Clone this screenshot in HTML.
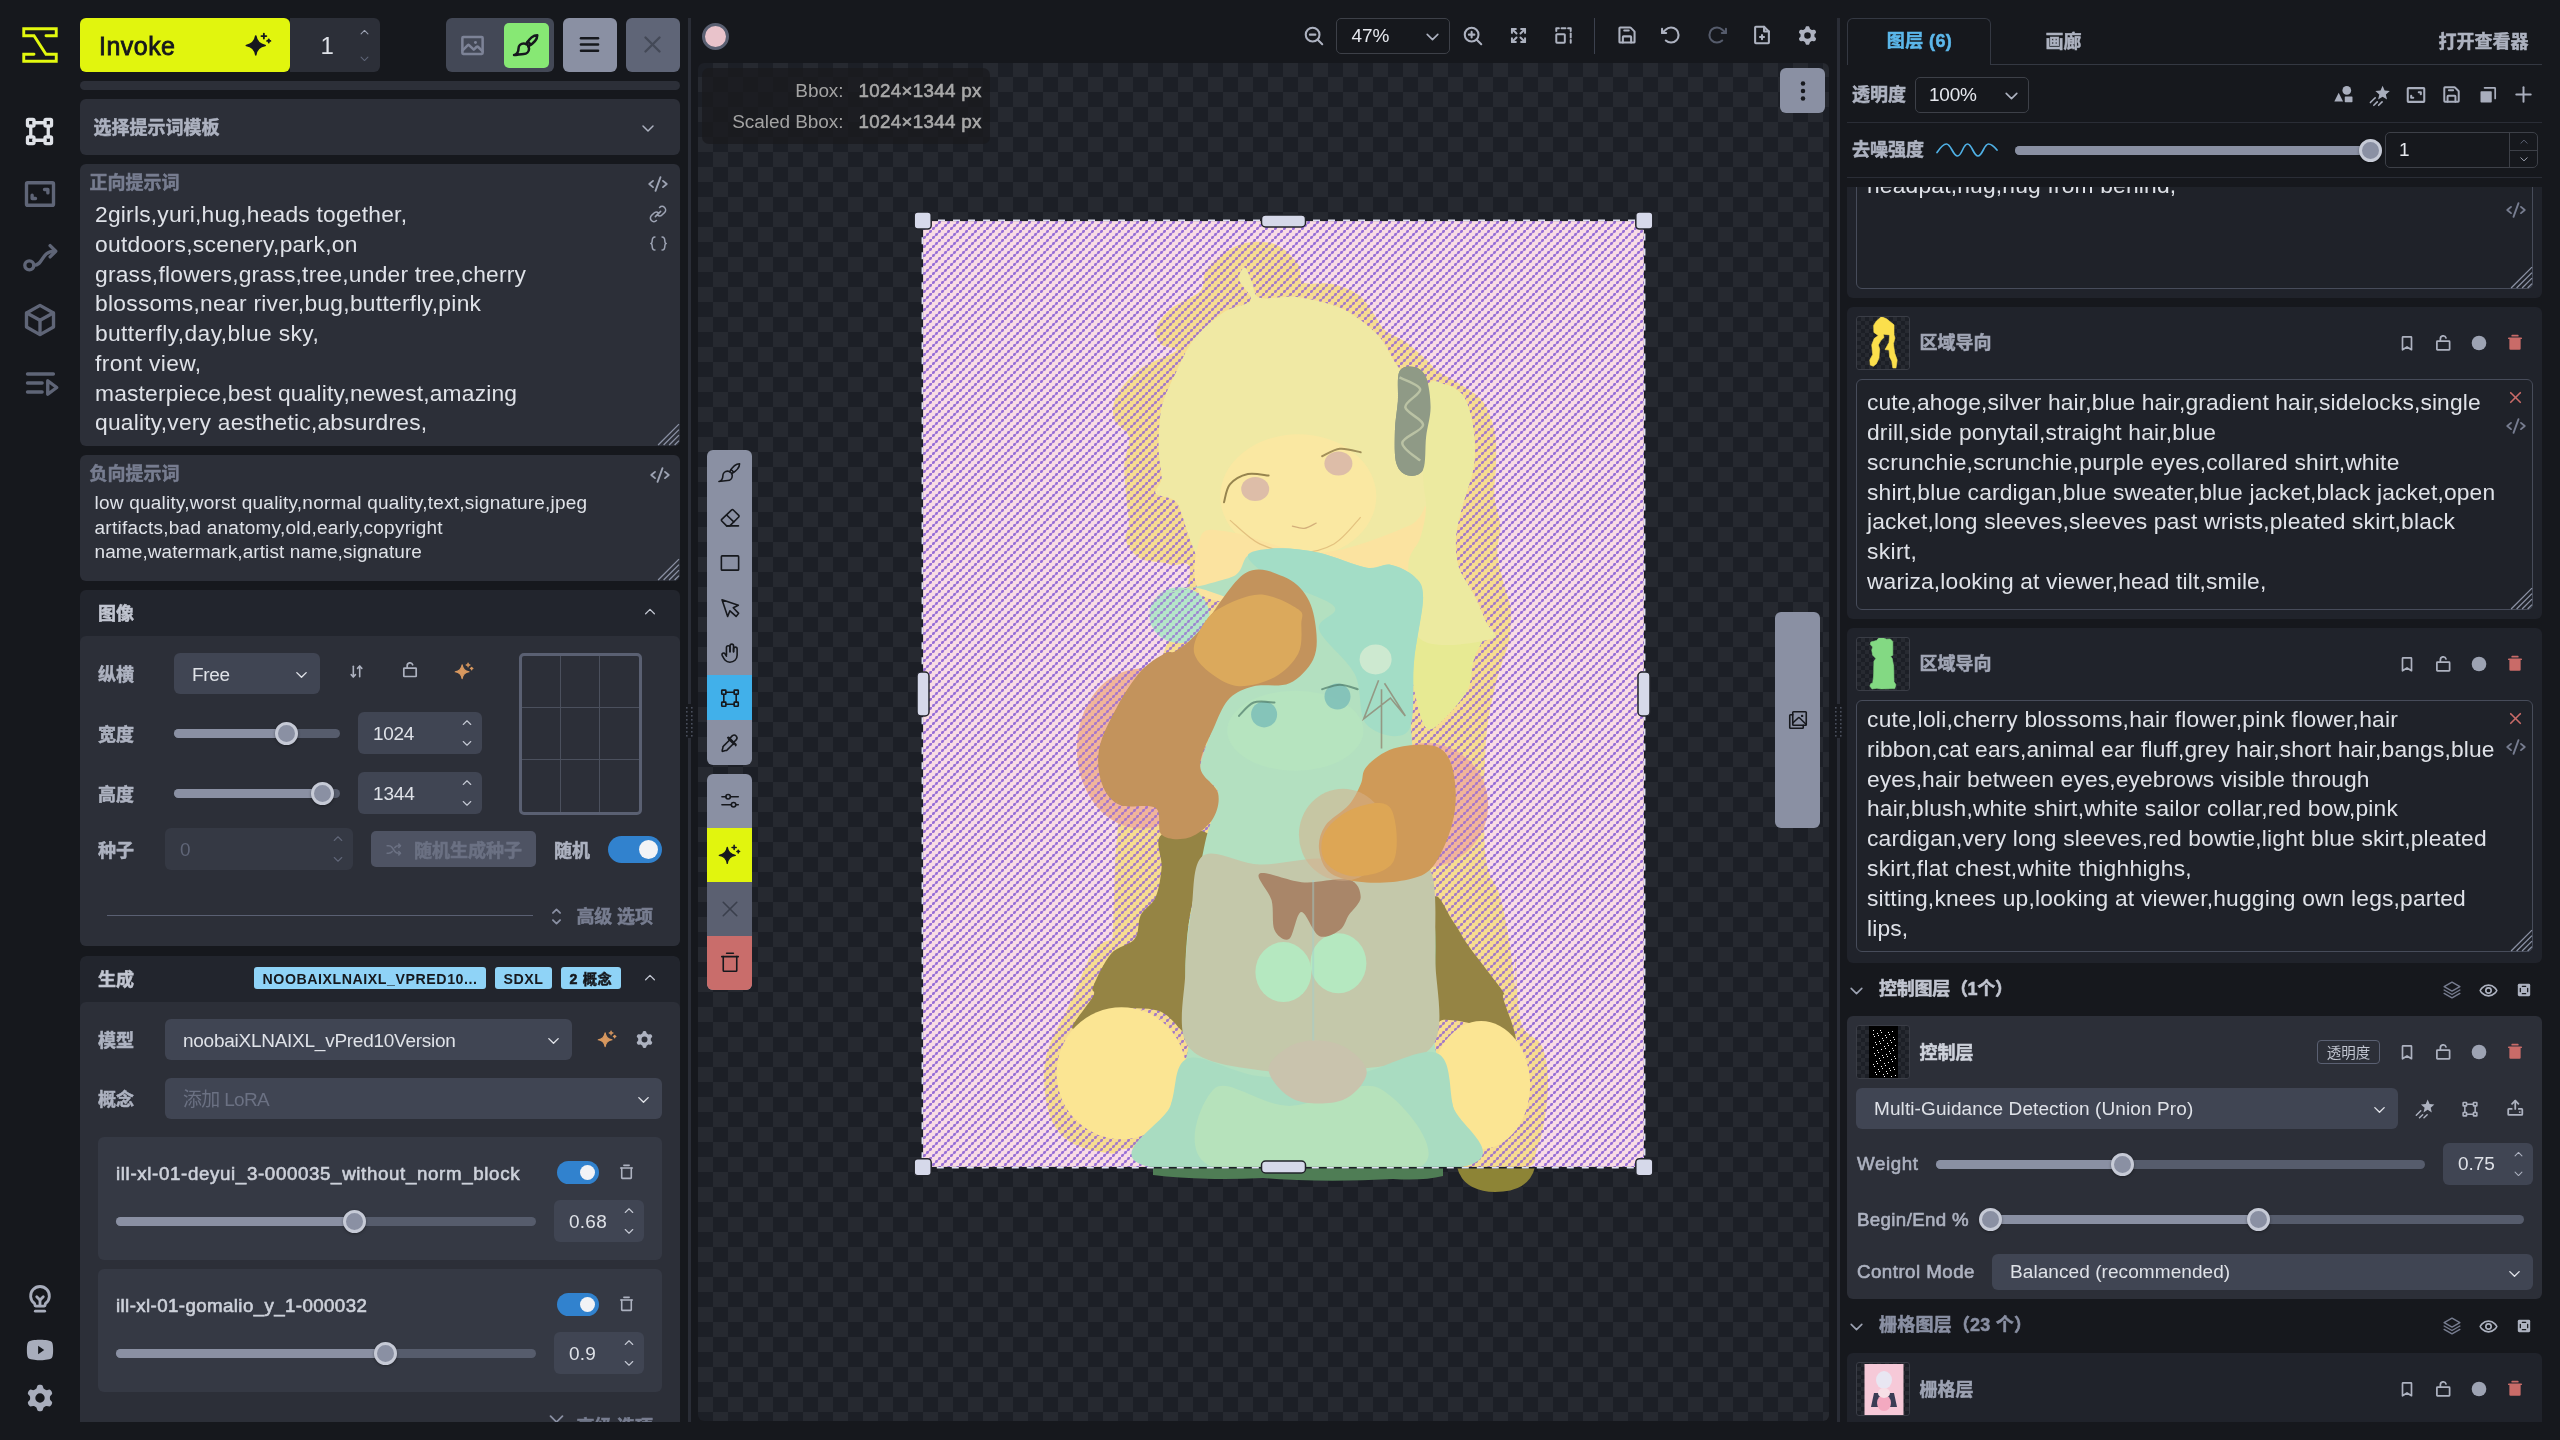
<!DOCTYPE html>
<html lang="zh-CN"><head><meta charset="utf-8"><title>Invoke - Canvas</title>
<style>html,body{margin:0;padding:0}body{width:2560px;height:1440px;overflow:hidden;background:#16181d;font-family:'Liberation Sans','Noto Sans CJK SC',sans-serif;position:relative}#app{position:absolute;left:0;top:0;width:2560px;height:1440px;overflow:hidden;will-change:transform}.a{position:absolute;box-sizing:border-box}.t{position:absolute;white-space:pre;margin:0}svg{position:absolute;overflow:visible}</style></head>
<body>
<div id="app">
<svg viewBox="0 0 80 80" style="left:0px;top:5px;width:80px;height:80px"><path d="M46,30.750 H56.250 V23.750 H23.750 V30.750 H34 L46,49.250 H56.250 V56.250 H23.750 V49.250 H34" fill="none" stroke="#e3f90f" stroke-width="2.9" stroke-linejoin="miter" stroke-linecap="round"/></svg>
<svg viewBox="0 0 256 256" style="left:22.2px;top:113.5px;width:35px;height:35px;color:#dfe2e8;"><g fill="none" stroke="currentColor" stroke-width="24" stroke-linecap="round" stroke-linejoin="round"><rect x="168" y="40" width="48" height="48" rx="8"/><rect x="40" y="40" width="48" height="48" rx="8"/><rect x="168" y="168" width="48" height="48" rx="8"/><rect x="40" y="168" width="48" height="48" rx="8"/><line x1="64" y1="168" x2="64" y2="88"/><line x1="168" y1="192" x2="88" y2="192"/><line x1="192" y1="88" x2="192" y2="168"/><line x1="88" y1="64" x2="168" y2="64"/></g></svg>
<svg viewBox="0 0 256 256" style="left:22px;top:176px;width:36px;height:36px;color:#5f6577;"><g fill="none" stroke="currentColor" stroke-width="24" stroke-linecap="round" stroke-linejoin="round"><rect x="32" y="48" width="192" height="160" rx="8"/><polyline points="160,96 184,96 184,120"/><polyline points="96,160 72,160 72,136"/></g></svg>
<svg viewBox="0 0 256 256" style="left:22px;top:239.5px;width:36px;height:36px;color:#5f6577;"><g fill="none" stroke="currentColor" stroke-width="24" stroke-linecap="round" stroke-linejoin="round"><circle cx="52" cy="180" r="32"/><path d="M84,180 c70,0 50,-100 148,-100"/><polyline points="200,40 240,80 200,120"/></g></svg>
<svg viewBox="0 0 256 256" style="left:21.7px;top:302px;width:36px;height:36px;color:#5f6577;"><g fill="none" stroke="currentColor" stroke-width="24" stroke-linecap="round" stroke-linejoin="round"><path d="M128,24 L224,78 V178 L128,232 L32,178 V78 Z"/><polyline points="34,78 128,130 222,78"/><line x1="128" y1="130" x2="128" y2="230"/></g></svg>
<svg viewBox="0 0 256 256" style="left:22.5px;top:365px;width:36px;height:36px;color:#5f6577;"><g fill="none" stroke="currentColor" stroke-width="24" stroke-linecap="round" stroke-linejoin="round"><line x1="32" y1="64" x2="216" y2="64"/><line x1="32" y1="128" x2="136" y2="128"/><line x1="32" y1="192" x2="136" y2="192"/><polygon points="240,160 176,208 176,112"/></g></svg>
<svg viewBox="0 0 256 256" style="left:25px;top:1284px;width:30px;height:30px;color:#a8adbc;"><g fill="none" stroke="currentColor" stroke-width="24" stroke-linecap="round" stroke-linejoin="round"><line x1="88" y1="232" x2="168" y2="232"/><path d="M78,164 a80,80 0 1 1 100,0 a16,16 0 0 0 -6,12 v4 a8,8 0 0 1 -8,8 H92 a8,8 0 0 1 -8,-8 v-4 a16,16 0 0 0 -6,-12 Z"/><polyline points="100,108 128,136 156,108"/><line x1="128" y1="136" x2="128" y2="186"/></g></svg>
<svg viewBox="0 0 256 256" style="left:25px;top:1335px;width:30px;height:30px;color:#a8adbc;"><path fill="currentColor" d="M234,70 a24,24 0 0 0 -14.5,-16.4 C186,41 131,41 128,41 s-58,0 -91.500,12.600 A24,24 0 0 0 22,70 C19,80 16,98 16,128 s3,48 6,58 a24,24 0 0 0 14.500,16.400 C69,215 125,215 128,215 s59,0 91.500,-12.600 A24,24 0 0 0 234,186 c3,-10 6,-28 6,-58 s-3,-48 -6,-58 Z M112,164 V92 l52,36 Z"/></svg>
<svg viewBox="0 0 256 256" style="left:25px;top:1383px;width:30px;height:30px;color:#a8adbc;"><path fill="currentColor" fill-rule="evenodd" d="M128.0,14.5 L135.4,15.0 L142.7,16.6 L149.2,21.4 L153.6,32.4 L156.7,43.4 L160.8,48.8 L165.5,52.0 L170.3,54.8 L175.1,57.6 L180.2,60.0 L186.9,60.8 L198.0,58.0 L209.7,56.4 L217.1,59.6 L222.2,65.1 L226.3,71.3 L229.6,77.9 L231.8,85.0 L230.9,93.1 L223.6,102.4 L215.6,110.6 L212.9,116.8 L212.5,122.5 L212.5,128.0 L212.5,133.5 L212.9,139.2 L215.6,145.4 L223.6,153.6 L230.9,162.9 L231.8,171.0 L229.6,178.1 L226.3,184.7 L222.2,190.9 L217.1,196.4 L209.7,199.6 L198.0,198.0 L186.9,195.2 L180.2,196.0 L175.1,198.4 L170.3,201.2 L165.5,204.0 L160.8,207.2 L156.7,212.6 L153.6,223.6 L149.2,234.6 L142.7,239.4 L135.4,241.0 L128.0,241.5 L120.6,241.0 L113.3,239.4 L106.8,234.6 L102.4,223.6 L99.3,212.6 L95.2,207.2 L90.5,204.0 L85.7,201.2 L80.9,198.4 L75.8,196.0 L69.1,195.2 L58.0,198.0 L46.3,199.6 L38.9,196.4 L33.8,190.9 L29.7,184.7 L26.4,178.1 L24.2,171.0 L25.1,162.9 L32.4,153.6 L40.4,145.4 L43.1,139.2 L43.5,133.5 L43.5,128.0 L43.5,122.5 L43.1,116.8 L40.4,110.6 L32.4,102.4 L25.1,93.1 L24.2,85.0 L26.4,77.9 L29.7,71.3 L33.8,65.1 L38.9,59.6 L46.3,56.4 L58.0,58.0 L69.1,60.8 L75.8,60.0 L80.9,57.6 L85.7,54.8 L90.5,52.0 L95.2,48.8 L99.3,43.4 L102.4,32.4 L106.8,21.4 L113.3,16.6 L120.6,15.0 Z M168,128 a40,40 0 1 0 -80,0 a40,40 0 1 0 80,0 Z"/></svg>
<div class="a" style="left:290px;top:18px;width:90px;height:54px;background:#2c2f38;border-radius:0 6px 6px 0;"></div>
<div class="a" style="left:80px;top:18px;width:210px;height:54px;background:#e1f50e;border-radius:6px;"></div>
<div class="t" style="left:99.00px;top:28.60px;height:34px;line-height:34px;font-size:24.96px;color:#16181d;-webkit-text-stroke:0.82px currentColor;letter-spacing:0.495px;">Invoke</div>
<svg viewBox="0 0 256 256" style="left:246px;top:32px;width:26px;height:26px;color:#16181d;"><g transform="translate(-14,22) scale(0.86)"><path fill="currentColor" stroke="currentColor" stroke-width="18" stroke-linejoin="round" d="M128,20 C138,84 172,118 236,128 C172,138 138,172 128,236 C118,172 84,138 20,128 C84,118 118,84 128,20 Z"/></g><g fill="none" stroke="currentColor" stroke-width="18" stroke-linecap="round" stroke-linejoin="round"><line x1="176" y1="16" x2="176" y2="64"/><line x1="152" y1="40" x2="200" y2="40"/><line x1="224" y1="72" x2="224" y2="104"/><line x1="208" y1="88" x2="240" y2="88"/></g></svg>
<div class="t" style="left:320.50px;top:28.60px;height:34px;line-height:34px;font-size:24px;color:#dfe2e8;letter-spacing:-3.594px;">1</div>
<svg viewBox="0 0 256 256" style="left:359px;top:26.5px;width:11px;height:11px;color:#9da3b3;"><g fill="none" stroke="currentColor" stroke-width="24" stroke-linecap="round" stroke-linejoin="round"><polyline points="48,160 128,80 208,160"/></g></svg>
<svg viewBox="0 0 256 256" style="left:359px;top:52.5px;width:11px;height:11px;color:#5f6577;"><g fill="none" stroke="currentColor" stroke-width="24" stroke-linecap="round" stroke-linejoin="round"><polyline points="208,96 128,176 48,96"/></g></svg>
<div class="a" style="left:446px;top:18px;width:108px;height:54px;background:#434856;border-radius:6px;"></div>
<svg viewBox="0 0 256 256" style="left:459px;top:31.5px;width:27px;height:27px;color:#7d8397;"><g fill="none" stroke="currentColor" stroke-width="24" stroke-linecap="round" stroke-linejoin="round"><rect x="32" y="48" width="192" height="160" rx="8"/><path d="M32,176 L84,124 a8,8 0 0 1 11.3,0 L140,168 l28,-28 a8,8 0 0 1 11.3,0 L224,184"/></g><circle cx="156" cy="100" r="14" fill="currentColor"/></svg>
<div class="a" style="left:504px;top:23px;width:45px;height:45px;background:#87e874;border-radius:5px;"></div>
<svg viewBox="0 0 256 256" style="left:513px;top:31.5px;width:27px;height:27px;color:#16181d;"><g fill="none" stroke="currentColor" stroke-width="24" stroke-linecap="round" stroke-linejoin="round"><path d="M10,218 c26,0 42,-32 42,-60 a50,50 0 1 1 50,50 c-28,0 -66,10 -92,10 Z"/><path d="M124,116 C142,84 182,30 230,30 c0,48 -54,88 -86,106"/><path d="M138,92 a76,76 0 0 1 28,28"/></g></svg>
<div class="a" style="left:563px;top:18px;width:54px;height:54px;background:#8a90a3;border-radius:6px;"></div>
<svg viewBox="0 0 256 256" style="left:577px;top:32.2px;width:25px;height:25px;color:#16181d;"><g fill="none" stroke="currentColor" stroke-width="24" stroke-linecap="round" stroke-linejoin="round"><line x1="40" y1="128" x2="216" y2="128"/><line x1="40" y1="64" x2="216" y2="64"/><line x1="40" y1="192" x2="216" y2="192"/></g></svg>
<div class="a" style="left:626px;top:18px;width:54px;height:54px;background:#5f6577;border-radius:6px;"></div>
<svg viewBox="0 0 256 256" style="left:639.5px;top:32.2px;width:25px;height:25px;color:#444957;"><g fill="none" stroke="currentColor" stroke-width="24" stroke-linecap="round" stroke-linejoin="round"><line x1="200" y1="56" x2="56" y2="200"/><line x1="200" y1="200" x2="56" y2="56"/></g></svg>
<div class="a" style="left:80px;top:81px;width:600px;height:9px;background:#2c2f38;border-radius:5px;"></div>
<div class="a" style="left:80px;top:99px;width:600px;height:56px;background:#2c2f38;border-radius:6px;"></div>
<div class="t" style="left:93.50px;top:115.90px;height:25px;line-height:25px;font-size:18px;color:#adb2c0;font-weight:700;-webkit-text-stroke:0.5px currentColor;">选择提示词模板</div>
<svg viewBox="0 0 256 256" style="left:640px;top:119.5px;width:16px;height:16px;color:#adb2c0;"><g fill="none" stroke="currentColor" stroke-width="24" stroke-linecap="round" stroke-linejoin="round"><polyline points="208,96 128,176 48,96"/></g></svg>
<div class="a" style="left:80px;top:164px;width:600px;height:282px;background:#2c2f38;border-radius:6px;"></div>
<div class="t" style="left:89.50px;top:170.90px;height:25px;line-height:25px;font-size:18px;color:#777d90;font-weight:700;-webkit-text-stroke:0.5px currentColor;">正向提示词</div>
<div class="t" style="left:95.00px;top:199.30px;height:30px;line-height:30px;font-size:22.79px;color:#dfe2e8;letter-spacing:0.226px;">2girls,yuri,hug,heads together,</div>
<div class="t" style="left:95.00px;top:229.00px;height:30px;line-height:30px;font-size:22.79px;color:#dfe2e8;letter-spacing:0.309px;">outdoors,scenery,park,on</div>
<div class="t" style="left:95.00px;top:258.70px;height:30px;line-height:30px;font-size:22.79px;color:#dfe2e8;letter-spacing:0.228px;">grass,flowers,grass,tree,under tree,cherry</div>
<div class="t" style="left:95.00px;top:288.40px;height:30px;line-height:30px;font-size:22.79px;color:#dfe2e8;letter-spacing:0.279px;">blossoms,near river,bug,butterfly,pink</div>
<div class="t" style="left:95.00px;top:318.10px;height:30px;line-height:30px;font-size:22.79px;color:#dfe2e8;letter-spacing:0.387px;">butterfly,day,blue sky,</div>
<div class="t" style="left:95.00px;top:347.80px;height:30px;line-height:30px;font-size:22.79px;color:#dfe2e8;letter-spacing:0.357px;">front view,</div>
<div class="t" style="left:95.00px;top:377.50px;height:30px;line-height:30px;font-size:22.79px;color:#dfe2e8;letter-spacing:0.186px;">masterpiece,best quality,newest,amazing</div>
<div class="t" style="left:95.00px;top:407.20px;height:30px;line-height:30px;font-size:22.79px;color:#dfe2e8;letter-spacing:0.222px;">quality,very aesthetic,absurdres,</div>
<svg viewBox="0 0 256 256" style="left:648px;top:173.5px;width:20px;height:20px;color:#9da3b3;"><g fill="none" stroke="currentColor" stroke-width="24" stroke-linecap="round" stroke-linejoin="round"><polyline points="64,88 16,128 64,168"/><polyline points="192,88 240,128 192,168"/><line x1="160" y1="40" x2="96" y2="216"/></g></svg>
<svg viewBox="0 0 256 256" style="left:648px;top:203.5px;width:20px;height:20px;color:#9da3b3;"><g fill="none" stroke="currentColor" stroke-width="20" stroke-linecap="round" stroke-linejoin="round"><path d="M94,162 L162,94"/><path d="M104,216 a45,45 0 0 1 -64,-64 l30,-30 a45,45 0 0 1 62,-2" transform="translate(4,-4)"/><path d="M152,40 a45,45 0 0 1 64,64 l-30,30 a45,45 0 0 1 -62,2" transform="translate(-4,4)"/></g></svg>
<svg viewBox="0 0 256 256" style="left:648.5px;top:234px;width:19px;height:19px;color:#9da3b3;"><g fill="none" stroke="currentColor" stroke-width="20" stroke-linecap="round" stroke-linejoin="round"><path d="M80,40 c-64,0 -16,88 -56,88 c40,0 -8,88 56,88"/><path d="M176,40 c64,0 16,88 56,88 c-40,0 8,88 -56,88"/></g></svg>
<svg viewBox="0 0 20 20" style="left:657px;top:423px;width:22px;height:22px;color:#8a90a3"><g stroke="currentColor" stroke-width="1.2" fill="none"><path d="M1,20 L20,1 M6,20 L20,6 M11,20 L20,11 M16,20 L20,16"/></g></svg>
<div class="a" style="left:80px;top:455px;width:600px;height:126px;background:#2c2f38;border-radius:6px;"></div>
<div class="t" style="left:89.50px;top:461.90px;height:25px;line-height:25px;font-size:18px;color:#777d90;font-weight:700;-webkit-text-stroke:0.5px currentColor;">负向提示词</div>
<div class="t" style="left:94.50px;top:489.80px;height:25px;line-height:25px;font-size:18.99px;color:#dfe2e8;letter-spacing:0.230px;">low quality,worst quality,normal quality,text,signature,jpeg</div>
<div class="t" style="left:94.50px;top:514.55px;height:25px;line-height:25px;font-size:18.99px;color:#dfe2e8;letter-spacing:0.252px;">artifacts,bad anatomy,old,early,copyright</div>
<div class="t" style="left:94.50px;top:539.30px;height:25px;line-height:25px;font-size:18.99px;color:#dfe2e8;letter-spacing:0.099px;">name,watermark,artist name,signature</div>
<svg viewBox="0 0 256 256" style="left:650px;top:464.5px;width:20px;height:20px;color:#9da3b3;"><g fill="none" stroke="currentColor" stroke-width="24" stroke-linecap="round" stroke-linejoin="round"><polyline points="64,88 16,128 64,168"/><polyline points="192,88 240,128 192,168"/><line x1="160" y1="40" x2="96" y2="216"/></g></svg>
<svg viewBox="0 0 20 20" style="left:657px;top:558px;width:22px;height:22px;color:#8a90a3"><g stroke="currentColor" stroke-width="1.2" fill="none"><path d="M1,20 L20,1 M6,20 L20,6 M11,20 L20,11 M16,20 L20,16"/></g></svg>
<div class="a" style="left:80px;top:590px;width:600px;height:356px;background:#22252d;border-radius:6px;"></div>
<div class="a" style="left:80px;top:636px;width:600px;height:310px;background:#2c2f38;border-radius:6px;"></div>
<div class="t" style="left:98.00px;top:601.90px;height:25px;line-height:25px;font-size:18px;color:#c1c5d0;font-weight:700;-webkit-text-stroke:0.5px currentColor;">图像</div>
<svg viewBox="0 0 256 256" style="left:643px;top:605px;width:14px;height:14px;color:#c1c5d0;"><g fill="none" stroke="currentColor" stroke-width="24" stroke-linecap="round" stroke-linejoin="round"><polyline points="48,160 128,80 208,160"/></g></svg>
<div class="t" style="left:98.00px;top:662.90px;height:25px;line-height:25px;font-size:18px;color:#adb2c0;font-weight:700;-webkit-text-stroke:0.5px currentColor;">纵横</div>
<div class="a" style="left:174px;top:653px;width:146px;height:41px;background:#404553;border-radius:6px;"></div>
<div class="t" style="left:192.00px;top:661.60px;height:25px;line-height:25px;font-size:18.99px;color:#dfe2e8;letter-spacing:-0.367px;">Free</div>
<svg viewBox="0 0 256 256" style="left:293.5px;top:667px;width:15px;height:15px;color:#dfe2e8;"><g fill="none" stroke="currentColor" stroke-width="24" stroke-linecap="round" stroke-linejoin="round"><polyline points="208,96 128,176 48,96"/></g></svg>
<svg viewBox="0 0 256 256" style="left:347.5px;top:662.5px;width:17px;height:17px;color:#adb2c0;"><g fill="none" stroke="currentColor" stroke-width="24" stroke-linecap="round" stroke-linejoin="round"><polyline points="112,176 80,208 48,176"/><line x1="80" y1="48" x2="80" y2="208"/><polyline points="144,80 176,48 208,80"/><line x1="176" y1="208" x2="176" y2="48"/></g></svg>
<svg viewBox="0 0 256 256" style="left:401px;top:661px;width:18px;height:18px;color:#adb2c0;"><g fill="none" stroke="currentColor" stroke-width="24" stroke-linecap="round" stroke-linejoin="round"><rect x="40" y="100" width="176" height="120" rx="8"/><path d="M88,100 V68 a40,40 0 0 1 78,-14"/></g></svg>
<svg viewBox="0 0 256 256" style="left:454.5px;top:661.5px;width:19px;height:19px;color:#d8985f;"><g transform="translate(-14,22) scale(0.86)"><path fill="currentColor" stroke="currentColor" stroke-width="18" stroke-linejoin="round" d="M128,20 C138,84 172,118 236,128 C172,138 138,172 128,236 C118,172 84,138 20,128 C84,118 118,84 128,20 Z"/></g><g fill="none" stroke="currentColor" stroke-width="18" stroke-linecap="round" stroke-linejoin="round"><line x1="176" y1="16" x2="176" y2="64"/><line x1="152" y1="40" x2="200" y2="40"/><line x1="224" y1="72" x2="224" y2="104"/><line x1="208" y1="88" x2="240" y2="88"/></g></svg>
<div class="a" style="left:519px;top:653px;width:123px;height:162px;border-radius:5px;border:3px solid #5a6072;"></div>
<div class="a" style="left:560px;top:656px;width:1px;height:156px;background:#4b505d;"></div>
<div class="a" style="left:599px;top:656px;width:1px;height:156px;background:#4b505d;"></div>
<div class="a" style="left:522px;top:707px;width:117px;height:1px;background:#4b505d;"></div>
<div class="a" style="left:522px;top:759px;width:117px;height:1px;background:#4b505d;"></div>
<div class="t" style="left:98.00px;top:722.90px;height:25px;line-height:25px;font-size:18px;color:#adb2c0;font-weight:700;-webkit-text-stroke:0.5px currentColor;">宽度</div>
<div class="a" style="left:174px;top:729px;width:166px;height:9px;background:#565c6c;border-radius:4.5px;"></div>
<div class="a" style="left:174px;top:729px;width:112.5px;height:9px;background:#8a90a3;border-radius:4.5px;"></div>
<div class="a" style="left:275px;top:722px;width:23px;height:23px;background:#8a90a3;border-radius:11.5px;border:3.5px solid #c6cad6;box-shadow:0 1px 3px rgba(0,0,0,.35);"></div>
<div class="a" style="left:358px;top:712px;width:124px;height:42px;background:#404553;border-radius:6px;"></div>
<div class="t" style="left:373.00px;top:721.10px;height:25px;line-height:25px;font-size:18.99px;color:#dfe2e8;letter-spacing:-0.305px;">1024</div>
<svg viewBox="0 0 256 256" style="left:460.5px;top:717px;width:12px;height:12px;color:#c3c7d2;"><g fill="none" stroke="currentColor" stroke-width="24" stroke-linecap="round" stroke-linejoin="round"><polyline points="48,160 128,80 208,160"/></g></svg>
<svg viewBox="0 0 256 256" style="left:460.5px;top:737px;width:12px;height:12px;color:#c3c7d2;"><g fill="none" stroke="currentColor" stroke-width="24" stroke-linecap="round" stroke-linejoin="round"><polyline points="208,96 128,176 48,96"/></g></svg>
<div class="t" style="left:98.00px;top:782.90px;height:25px;line-height:25px;font-size:18px;color:#adb2c0;font-weight:700;-webkit-text-stroke:0.5px currentColor;">高度</div>
<div class="a" style="left:174px;top:789px;width:166px;height:9px;background:#565c6c;border-radius:4.5px;"></div>
<div class="a" style="left:174px;top:789px;width:148px;height:9px;background:#8a90a3;border-radius:4.5px;"></div>
<div class="a" style="left:310.5px;top:782px;width:23px;height:23px;background:#8a90a3;border-radius:11.5px;border:3.5px solid #c6cad6;box-shadow:0 1px 3px rgba(0,0,0,.35);"></div>
<div class="a" style="left:358px;top:772px;width:124px;height:42px;background:#404553;border-radius:6px;"></div>
<div class="t" style="left:373.00px;top:781.10px;height:25px;line-height:25px;font-size:18.99px;color:#dfe2e8;letter-spacing:-0.133px;">1344</div>
<svg viewBox="0 0 256 256" style="left:460.5px;top:777px;width:12px;height:12px;color:#c3c7d2;"><g fill="none" stroke="currentColor" stroke-width="24" stroke-linecap="round" stroke-linejoin="round"><polyline points="48,160 128,80 208,160"/></g></svg>
<svg viewBox="0 0 256 256" style="left:460.5px;top:797px;width:12px;height:12px;color:#c3c7d2;"><g fill="none" stroke="currentColor" stroke-width="24" stroke-linecap="round" stroke-linejoin="round"><polyline points="208,96 128,176 48,96"/></g></svg>
<div class="t" style="left:98.00px;top:838.90px;height:25px;line-height:25px;font-size:18px;color:#adb2c0;font-weight:700;-webkit-text-stroke:0.5px currentColor;">种子</div>
<div class="a" style="left:165px;top:828px;width:188px;height:42px;background:#353944;border-radius:6px;"></div>
<div class="t" style="left:180.00px;top:837.10px;height:25px;line-height:25px;font-size:18.99px;color:#5f6577;letter-spacing:0.797px;">0</div>
<svg viewBox="0 0 256 256" style="left:331.5px;top:833px;width:12px;height:12px;color:#5f6577;"><g fill="none" stroke="currentColor" stroke-width="24" stroke-linecap="round" stroke-linejoin="round"><polyline points="48,160 128,80 208,160"/></g></svg>
<svg viewBox="0 0 256 256" style="left:331.5px;top:853px;width:12px;height:12px;color:#5f6577;"><g fill="none" stroke="currentColor" stroke-width="24" stroke-linecap="round" stroke-linejoin="round"><polyline points="208,96 128,176 48,96"/></g></svg>
<div class="a" style="left:371px;top:831px;width:165px;height:36px;background:#4e5363;border-radius:5px;"></div>
<svg viewBox="0 0 256 256" style="left:384.5px;top:840.5px;width:17px;height:17px;color:#6b7183;"><g fill="none" stroke="currentColor" stroke-width="24" stroke-linecap="round" stroke-linejoin="round"><path d="M32,72 H55.100 a64,64 0 0 1 52.100,26.800 l41.600,58.400 A64,64 0 0 0 200.900,184 H232"/><polyline points="208,48 232,72 208,96"/><polyline points="208,160 232,184 208,208"/><path d="M147.700,100.500 l1.100,-1.700 A64,64 0 0 1 200.900,72 H232"/><path d="M32,184 H55.100 a64,64 0 0 0 52.100,-26.800 l1.100,-1.700"/></g></svg>
<div class="t" style="left:414.00px;top:838.90px;height:25px;line-height:25px;font-size:18px;color:#6b7183;font-weight:700;-webkit-text-stroke:0.5px currentColor;">随机生成种子</div>
<div class="t" style="left:554.00px;top:838.90px;height:25px;line-height:25px;font-size:18px;color:#adb2c0;font-weight:700;-webkit-text-stroke:0.5px currentColor;">随机</div>
<div class="a" style="left:608px;top:836px;width:54px;height:27px;background:#3182ce;border-radius:13.5px;"></div>
<div class="a" style="left:638.75px;top:839.75px;width:19.5px;height:19.5px;background:#f2f3f6;border-radius:9.75px;"></div>
<div class="a" style="left:107px;top:915px;width:426px;height:1px;background:#5a6072;"></div>
<svg viewBox="0 0 256 256" style="left:546.5px;top:906.5px;width:19px;height:19px;color:#8a90a3;"><g fill="none" stroke="currentColor" stroke-width="24" stroke-linecap="round" stroke-linejoin="round"><polyline points="80,176 128,224 176,176"/><polyline points="80,80 128,32 176,80"/></g></svg>
<div class="t" style="left:576.50px;top:904.90px;height:25px;line-height:25px;font-size:18px;color:#777d90;font-weight:700;-webkit-text-stroke:0.5px currentColor;letter-spacing:-0.150px;">高级 选项</div>
<div class="a" style="left:80px;top:956px;width:600px;height:466px;overflow:hidden;border-radius:6px 6px 0 0">
<div class="a" style="left:0px;top:0px;width:600px;height:480px;background:#22252d;border-radius:6px;"></div>
<div class="a" style="left:0px;top:46px;width:600px;height:440px;background:#2c2f38;border-radius:6px;"></div>
</div>
<div class="t" style="left:98.00px;top:967.90px;height:25px;line-height:25px;font-size:18px;color:#c1c5d0;font-weight:700;-webkit-text-stroke:0.5px currentColor;">生成</div>
<div class="a" style="left:254px;top:967px;width:232px;height:22px;background:#8fd3f7;border-radius:3px;"></div>
<div class="t" style="left:262.50px;top:969.10px;height:20px;line-height:20px;font-size:14.2px;color:#16181d;font-weight:700;letter-spacing:0.549px;">NOOBAIXLNAIXL_VPRED10...</div>
<div class="a" style="left:495px;top:967px;width:57px;height:22px;background:#8fd3f7;border-radius:3px;"></div>
<div class="t" style="left:503.50px;top:969.10px;height:20px;line-height:20px;font-size:14.2px;color:#16181d;font-weight:700;letter-spacing:0.539px;">SDXL</div>
<div class="a" style="left:561px;top:967px;width:60px;height:22px;background:#8fd3f7;border-radius:3px;"></div>
<div class="t" style="left:569.50px;top:969.10px;height:20px;line-height:20px;font-size:14.2px;color:#16181d;font-weight:700;-webkit-text-stroke:0.5px currentColor;letter-spacing:0.695px;">2 概念</div>
<svg viewBox="0 0 256 256" style="left:643px;top:971px;width:14px;height:14px;color:#c1c5d0;"><g fill="none" stroke="currentColor" stroke-width="24" stroke-linecap="round" stroke-linejoin="round"><polyline points="48,160 128,80 208,160"/></g></svg>
<div class="t" style="left:98.00px;top:1028.90px;height:25px;line-height:25px;font-size:18px;color:#adb2c0;font-weight:700;-webkit-text-stroke:0.5px currentColor;">模型</div>
<div class="a" style="left:165px;top:1019px;width:407px;height:41px;background:#404553;border-radius:6px;"></div>
<div class="t" style="left:183.00px;top:1027.60px;height:25px;line-height:25px;font-size:18.99px;color:#dfe2e8;letter-spacing:-0.251px;">noobaiXLNAIXL_vPred10Version</div>
<svg viewBox="0 0 256 256" style="left:545.5px;top:1033px;width:15px;height:15px;color:#dfe2e8;"><g fill="none" stroke="currentColor" stroke-width="24" stroke-linecap="round" stroke-linejoin="round"><polyline points="208,96 128,176 48,96"/></g></svg>
<svg viewBox="0 0 256 256" style="left:598px;top:1029.5px;width:19px;height:19px;color:#d8985f;"><g transform="translate(-14,22) scale(0.86)"><path fill="currentColor" stroke="currentColor" stroke-width="18" stroke-linejoin="round" d="M128,20 C138,84 172,118 236,128 C172,138 138,172 128,236 C118,172 84,138 20,128 C84,118 118,84 128,20 Z"/></g><g fill="none" stroke="currentColor" stroke-width="18" stroke-linecap="round" stroke-linejoin="round"><line x1="176" y1="16" x2="176" y2="64"/><line x1="152" y1="40" x2="200" y2="40"/><line x1="224" y1="72" x2="224" y2="104"/><line x1="208" y1="88" x2="240" y2="88"/></g></svg>
<svg viewBox="0 0 256 256" style="left:634.5px;top:1030px;width:19px;height:19px;color:#adb2c0;"><path fill="currentColor" fill-rule="evenodd" d="M128.0,14.5 L135.4,15.0 L142.7,16.6 L149.2,21.4 L153.6,32.4 L156.7,43.4 L160.8,48.8 L165.5,52.0 L170.3,54.8 L175.1,57.6 L180.2,60.0 L186.9,60.8 L198.0,58.0 L209.7,56.4 L217.1,59.6 L222.2,65.1 L226.3,71.3 L229.6,77.9 L231.8,85.0 L230.9,93.1 L223.6,102.4 L215.6,110.6 L212.9,116.8 L212.5,122.5 L212.5,128.0 L212.5,133.5 L212.9,139.2 L215.6,145.4 L223.6,153.6 L230.9,162.9 L231.8,171.0 L229.6,178.1 L226.3,184.7 L222.2,190.9 L217.1,196.4 L209.7,199.6 L198.0,198.0 L186.9,195.2 L180.2,196.0 L175.1,198.4 L170.3,201.2 L165.5,204.0 L160.8,207.2 L156.7,212.6 L153.6,223.6 L149.2,234.6 L142.7,239.4 L135.4,241.0 L128.0,241.5 L120.6,241.0 L113.3,239.4 L106.8,234.6 L102.4,223.6 L99.3,212.6 L95.2,207.2 L90.5,204.0 L85.7,201.2 L80.9,198.4 L75.8,196.0 L69.1,195.2 L58.0,198.0 L46.3,199.6 L38.9,196.4 L33.8,190.9 L29.7,184.7 L26.4,178.1 L24.2,171.0 L25.1,162.9 L32.4,153.6 L40.4,145.4 L43.1,139.2 L43.5,133.5 L43.5,128.0 L43.5,122.5 L43.1,116.8 L40.4,110.6 L32.4,102.4 L25.1,93.1 L24.2,85.0 L26.4,77.9 L29.7,71.3 L33.8,65.1 L38.9,59.6 L46.3,56.4 L58.0,58.0 L69.1,60.8 L75.8,60.0 L80.9,57.6 L85.7,54.8 L90.5,52.0 L95.2,48.8 L99.3,43.4 L102.4,32.4 L106.8,21.4 L113.3,16.6 L120.6,15.0 Z M168,128 a40,40 0 1 0 -80,0 a40,40 0 1 0 80,0 Z"/></svg>
<div class="t" style="left:98.00px;top:1087.90px;height:25px;line-height:25px;font-size:18px;color:#adb2c0;font-weight:700;-webkit-text-stroke:0.5px currentColor;">概念</div>
<div class="a" style="left:165px;top:1078px;width:497px;height:41px;background:#404553;border-radius:6px;"></div>
<div class="t" style="left:183.00px;top:1086.60px;height:25px;line-height:25px;font-size:18.99px;color:#6b7183;letter-spacing:-0.670px;">添加 LoRA</div>
<svg viewBox="0 0 256 256" style="left:635.5px;top:1092px;width:15px;height:15px;color:#dfe2e8;"><g fill="none" stroke="currentColor" stroke-width="24" stroke-linecap="round" stroke-linejoin="round"><polyline points="208,96 128,176 48,96"/></g></svg>
<div class="a" style="left:98px;top:1137px;width:564px;height:123px;background:#353944;border-radius:6px;"></div>
<div class="t" style="left:116.00px;top:1160.60px;height:25px;line-height:25px;font-size:18.72px;color:#cdd1da;-webkit-text-stroke:0.61px currentColor;letter-spacing:0.646px;">ill-xl-01-deyui_3-000035_without_norm_block</div>
<div class="a" style="left:557px;top:1161px;width:42px;height:23px;background:#3182ce;border-radius:11.5px;"></div>
<div class="a" style="left:579.75px;top:1164.75px;width:15.5px;height:15.5px;background:#f2f3f6;border-radius:7.75px;"></div>
<svg viewBox="0 0 256 256" style="left:617.5px;top:1163.5px;width:17px;height:17px;color:#adb2c0;"><g fill="none" stroke="currentColor" stroke-width="24" stroke-linecap="round" stroke-linejoin="round"><line x1="216" y1="60" x2="40" y2="60"/><line x1="88" y1="20" x2="168" y2="20"/><path d="M200,60 V208 a8,8 0 0 1 -8,8 H64 a8,8 0 0 1 -8,-8 V60"/></g></svg>
<div class="a" style="left:116px;top:1216.5px;width:420px;height:9px;background:#565c6c;border-radius:4.5px;"></div>
<div class="a" style="left:116px;top:1216.5px;width:238.5px;height:9px;background:#8a90a3;border-radius:4.5px;"></div>
<div class="a" style="left:343px;top:1209.5px;width:23px;height:23px;background:#8a90a3;border-radius:11.5px;border:3.5px solid #c6cad6;box-shadow:0 1px 3px rgba(0,0,0,.35);"></div>
<div class="a" style="left:554px;top:1200px;width:90px;height:42px;background:#404553;border-radius:6px;"></div>
<div class="t" style="left:569.00px;top:1209.10px;height:25px;line-height:25px;font-size:18.99px;color:#dfe2e8;letter-spacing:0.246px;">0.68</div>
<svg viewBox="0 0 256 256" style="left:622.5px;top:1205px;width:12px;height:12px;color:#c3c7d2;"><g fill="none" stroke="currentColor" stroke-width="24" stroke-linecap="round" stroke-linejoin="round"><polyline points="48,160 128,80 208,160"/></g></svg>
<svg viewBox="0 0 256 256" style="left:622.5px;top:1225px;width:12px;height:12px;color:#c3c7d2;"><g fill="none" stroke="currentColor" stroke-width="24" stroke-linecap="round" stroke-linejoin="round"><polyline points="208,96 128,176 48,96"/></g></svg>
<div class="a" style="left:98px;top:1269px;width:564px;height:123px;background:#353944;border-radius:6px;"></div>
<div class="t" style="left:116.00px;top:1292.60px;height:25px;line-height:25px;font-size:18.72px;color:#cdd1da;-webkit-text-stroke:0.61px currentColor;letter-spacing:0.397px;">ill-xl-01-gomalio_y_1-000032</div>
<div class="a" style="left:557px;top:1293px;width:42px;height:23px;background:#3182ce;border-radius:11.5px;"></div>
<div class="a" style="left:579.75px;top:1296.75px;width:15.5px;height:15.5px;background:#f2f3f6;border-radius:7.75px;"></div>
<svg viewBox="0 0 256 256" style="left:617.5px;top:1295.5px;width:17px;height:17px;color:#adb2c0;"><g fill="none" stroke="currentColor" stroke-width="24" stroke-linecap="round" stroke-linejoin="round"><line x1="216" y1="60" x2="40" y2="60"/><line x1="88" y1="20" x2="168" y2="20"/><path d="M200,60 V208 a8,8 0 0 1 -8,8 H64 a8,8 0 0 1 -8,-8 V60"/></g></svg>
<div class="a" style="left:116px;top:1348.5px;width:420px;height:9px;background:#565c6c;border-radius:4.5px;"></div>
<div class="a" style="left:116px;top:1348.5px;width:269.5px;height:9px;background:#8a90a3;border-radius:4.5px;"></div>
<div class="a" style="left:374px;top:1341.5px;width:23px;height:23px;background:#8a90a3;border-radius:11.5px;border:3.5px solid #c6cad6;box-shadow:0 1px 3px rgba(0,0,0,.35);"></div>
<div class="a" style="left:554px;top:1332px;width:90px;height:42px;background:#404553;border-radius:6px;"></div>
<div class="t" style="left:569.00px;top:1341.10px;height:25px;line-height:25px;font-size:18.99px;color:#dfe2e8;letter-spacing:0.240px;">0.9</div>
<svg viewBox="0 0 256 256" style="left:622.5px;top:1337px;width:12px;height:12px;color:#c3c7d2;"><g fill="none" stroke="currentColor" stroke-width="24" stroke-linecap="round" stroke-linejoin="round"><polyline points="48,160 128,80 208,160"/></g></svg>
<svg viewBox="0 0 256 256" style="left:622.5px;top:1357px;width:12px;height:12px;color:#c3c7d2;"><g fill="none" stroke="currentColor" stroke-width="24" stroke-linecap="round" stroke-linejoin="round"><polyline points="208,96 128,176 48,96"/></g></svg>
<div class="a" style="left:80px;top:1400px;width:600px;height:22px;overflow:hidden">
<svg viewBox="0 0 256 256" style="left:466.5px;top:8.5px;width:19px;height:19px;color:#8a90a3"><g fill="none" stroke="currentColor" stroke-width="24" stroke-linecap="round" stroke-linejoin="round"><polyline points="208,96 128,176 48,96"/></g></svg>
<div class="t" style="left:496.50px;top:14.90px;height:25px;line-height:25px;font-size:18px;color:#777d90;font-weight:700;-webkit-text-stroke:0.5px currentColor;letter-spacing:-0.150px;">高级 选项</div>
</div>
<div class="a" style="left:688px;top:18px;width:3px;height:1404px;background:#2a2d36;"></div>
<div class="a" style="left:684px;top:704px;width:11px;height:34px;background:#16181d;"></div>
<svg viewBox="0 0 11 34" style="left:684px;top:704px;width:11px;height:34px"><g fill="#4a4f5c"><rect x="2" y="3" width="1.6" height="1.6"/><rect x="2" y="7" width="1.6" height="1.6"/><rect x="2" y="11" width="1.6" height="1.6"/><rect x="2" y="15" width="1.6" height="1.6"/><rect x="2" y="19" width="1.6" height="1.6"/><rect x="2" y="23" width="1.6" height="1.6"/><rect x="2" y="27" width="1.6" height="1.6"/><rect x="2" y="31" width="1.6" height="1.6"/><rect x="7" y="3" width="1.6" height="1.6"/><rect x="7" y="7" width="1.6" height="1.6"/><rect x="7" y="11" width="1.6" height="1.6"/><rect x="7" y="15" width="1.6" height="1.6"/><rect x="7" y="19" width="1.6" height="1.6"/><rect x="7" y="23" width="1.6" height="1.6"/><rect x="7" y="27" width="1.6" height="1.6"/><rect x="7" y="31" width="1.6" height="1.6"/></g></svg>
<div class="a" style="left:1837px;top:18px;width:3px;height:1404px;background:#2a2d36;"></div>
<div class="a" style="left:1833px;top:704px;width:11px;height:34px;background:#16181d;"></div>
<svg viewBox="0 0 11 34" style="left:1833px;top:704px;width:11px;height:34px"><g fill="#4a4f5c"><rect x="2" y="3" width="1.6" height="1.6"/><rect x="2" y="7" width="1.6" height="1.6"/><rect x="2" y="11" width="1.6" height="1.6"/><rect x="2" y="15" width="1.6" height="1.6"/><rect x="2" y="19" width="1.6" height="1.6"/><rect x="2" y="23" width="1.6" height="1.6"/><rect x="2" y="27" width="1.6" height="1.6"/><rect x="2" y="31" width="1.6" height="1.6"/><rect x="7" y="3" width="1.6" height="1.6"/><rect x="7" y="7" width="1.6" height="1.6"/><rect x="7" y="11" width="1.6" height="1.6"/><rect x="7" y="15" width="1.6" height="1.6"/><rect x="7" y="19" width="1.6" height="1.6"/><rect x="7" y="23" width="1.6" height="1.6"/><rect x="7" y="27" width="1.6" height="1.6"/><rect x="7" y="31" width="1.6" height="1.6"/></g></svg>
<div class="a" style="left:702px;top:23px;width:27px;height:27px;background:#e9c3cb;border-radius:14px;border:3px solid #5a6072;"></div>
<svg viewBox="0 0 256 256" style="left:1303px;top:24.5px;width:22px;height:22px;color:#adb2c0;"><g fill="none" stroke="currentColor" stroke-width="24" stroke-linecap="round" stroke-linejoin="round"><circle cx="112" cy="112" r="80"/><line x1="168.600" y1="168.600" x2="224" y2="224"/><line x1="80" y1="112" x2="144" y2="112"/></g></svg>
<div class="a" style="left:1336px;top:18px;width:114px;height:36px;border-radius:5px;border:1px solid #3d4048;"></div>
<div class="t" style="left:1351.50px;top:23.00px;height:25px;line-height:25px;font-size:18.99px;color:#e6e8ee;">47%</div>
<svg viewBox="0 0 256 256" style="left:1423.5px;top:27.5px;width:17px;height:17px;color:#adb2c0;"><g fill="none" stroke="currentColor" stroke-width="24" stroke-linecap="round" stroke-linejoin="round"><polyline points="208,96 128,176 48,96"/></g></svg>
<svg viewBox="0 0 256 256" style="left:1462px;top:24.5px;width:22px;height:22px;color:#adb2c0;"><g fill="none" stroke="currentColor" stroke-width="24" stroke-linecap="round" stroke-linejoin="round"><circle cx="112" cy="112" r="80"/><line x1="168.600" y1="168.600" x2="224" y2="224"/><line x1="80" y1="112" x2="144" y2="112"/><line x1="112" y1="80" x2="112" y2="144"/></g></svg>
<svg viewBox="0 0 256 256" style="left:1507.5px;top:24.5px;width:21px;height:21px;color:#adb2c0;"><g fill="none" stroke="currentColor" stroke-width="24" stroke-linecap="round" stroke-linejoin="round"><polyline points="160,48 208,48 208,96"/><line x1="152" y1="104" x2="208" y2="48"/><polyline points="96,208 48,208 48,160"/><line x1="104" y1="152" x2="48" y2="208"/><polyline points="208,160 208,208 160,208"/><line x1="152" y1="152" x2="208" y2="208"/><polyline points="48,96 48,48 96,48"/><line x1="104" y1="104" x2="48" y2="48"/></g></svg>
<svg viewBox="0 0 256 256" style="left:1552.5px;top:24.5px;width:21px;height:21px;color:#adb2c0;"><g fill="none" stroke="currentColor" stroke-width="24" stroke-linecap="round" stroke-linejoin="round"><line x1="104" y1="40" x2="152" y2="40"/><polyline points="184,40 216,40 216,72"/><line x1="216" y1="104" x2="216" y2="152"/><line x1="216" y1="184" x2="216" y2="216"/><polyline points="72,40 40,40 40,72"/><rect x="40" y="112" width="104" height="104" rx="8"/></g></svg>
<div class="a" style="left:1594px;top:18px;width:1px;height:36px;background:#3c414e;"></div>
<svg viewBox="0 0 256 256" style="left:1616px;top:24.2px;width:22px;height:22px;color:#adb2c0;"><g fill="none" stroke="currentColor" stroke-width="24" stroke-linecap="round" stroke-linejoin="round"><path d="M216,91.300 V208 a8,8 0 0 1 -8,8 H48 a8,8 0 0 1 -8,-8 V48 a8,8 0 0 1 8,-8 H164.700 a8,8 0 0 1 5.600,2.300 l43.400,43.400 A8,8 0 0 1 216,91.300 Z"/><path d="M80,216 V152 a8,8 0 0 1 8,-8 h80 a8,8 0 0 1 8,8 v64"/><line x1="96" y1="76" x2="148" y2="76"/></g></svg>
<svg viewBox="0 0 256 256" style="left:1660px;top:24.2px;width:22px;height:22px;color:#adb2c0;"><g fill="none" stroke="currentColor" stroke-width="24" stroke-linecap="round" stroke-linejoin="round"><polyline points="24,56 24,104 72,104"/><path d="M67.600,192 A88,88 0 1 0 65.800,65.800 L24,104"/></g></svg>
<svg viewBox="0 0 256 256" style="left:1706px;top:24.2px;width:22px;height:22px;color:#555b6b;"><g fill="none" stroke="currentColor" stroke-width="24" stroke-linecap="round" stroke-linejoin="round"><polyline points="232,56 232,104 184,104"/><path d="M188.400,192 a88,88 0 1 1 1.800,-126.200 L232,104"/></g></svg>
<svg viewBox="0 0 256 256" style="left:1751px;top:24.2px;width:22px;height:22px;color:#adb2c0;"><g fill="none" stroke="currentColor" stroke-width="24" stroke-linecap="round" stroke-linejoin="round"><path d="M200,224 H56 a8,8 0 0 1 -8,-8 V40 a8,8 0 0 1 8,-8 h96 l56,56 V216 a8,8 0 0 1 -8,8 Z"/><polyline points="152,32 152,88 208,88"/><line x1="104" y1="152" x2="152" y2="152"/><line x1="128" y1="128" x2="128" y2="176"/></g></svg>
<svg viewBox="0 0 256 256" style="left:1796.5px;top:24.7px;width:21px;height:21px;color:#adb2c0;"><path fill="currentColor" fill-rule="evenodd" d="M128.0,14.5 L135.4,15.0 L142.7,16.6 L149.2,21.4 L153.6,32.4 L156.7,43.4 L160.8,48.8 L165.5,52.0 L170.3,54.8 L175.1,57.6 L180.2,60.0 L186.9,60.8 L198.0,58.0 L209.7,56.4 L217.1,59.6 L222.2,65.1 L226.3,71.3 L229.6,77.9 L231.8,85.0 L230.9,93.1 L223.6,102.4 L215.6,110.6 L212.9,116.8 L212.5,122.5 L212.5,128.0 L212.5,133.5 L212.9,139.2 L215.6,145.4 L223.6,153.6 L230.9,162.9 L231.8,171.0 L229.6,178.1 L226.3,184.7 L222.2,190.9 L217.1,196.4 L209.7,199.6 L198.0,198.0 L186.9,195.2 L180.2,196.0 L175.1,198.4 L170.3,201.2 L165.5,204.0 L160.8,207.2 L156.7,212.6 L153.6,223.6 L149.2,234.6 L142.7,239.4 L135.4,241.0 L128.0,241.5 L120.6,241.0 L113.3,239.4 L106.8,234.6 L102.4,223.6 L99.3,212.6 L95.2,207.2 L90.5,204.0 L85.7,201.2 L80.9,198.4 L75.8,196.0 L69.1,195.2 L58.0,198.0 L46.3,199.6 L38.9,196.4 L33.8,190.9 L29.7,184.7 L26.4,178.1 L24.2,171.0 L25.1,162.9 L32.4,153.6 L40.4,145.4 L43.1,139.2 L43.5,133.5 L43.5,128.0 L43.5,122.5 L43.1,116.8 L40.4,110.6 L32.4,102.4 L25.1,93.1 L24.2,85.0 L26.4,77.9 L29.7,71.3 L33.8,65.1 L38.9,59.6 L46.3,56.4 L58.0,58.0 L69.1,60.8 L75.8,60.0 L80.9,57.6 L85.7,54.8 L90.5,52.0 L95.2,48.8 L99.3,43.4 L102.4,32.4 L106.8,21.4 L113.3,16.6 L120.6,15.0 Z M168,128 a40,40 0 1 0 -80,0 a40,40 0 1 0 80,0 Z"/></svg>
<div class="a" style="left:698px;top:63px;width:1131px;height:1358px;border-radius:6px;overflow:hidden;background-color:#1c1f26;background-image:conic-gradient(#262930 25%,transparent 0 50%,#262930 0 75%,transparent 0);background-size:30px 30px;background-position:0px -1px;">
<svg viewBox="0 0 721 946" style="left:225px;top:158px;width:721px;height:946px"><defs><pattern id="sp" width="9" height="9" patternUnits="userSpaceOnUse"><rect width="9" height="9" fill="#f9dce5"/><g fill="#966cd6"><circle cx="1.5" cy="7.5" r="1.38"/><circle cx="4.5" cy="4.5" r="1.38"/><circle cx="7.5" cy="1.5" r="1.38"/></g><path d="M-1,10 L10,-1" stroke="#966cd6" stroke-width="1.05" opacity="0.9"/></pattern><pattern id="sy" width="9" height="9" patternUnits="userSpaceOnUse"><rect width="9" height="9" fill="#f7dc90"/><g fill="#a277c6"><circle cx="1.5" cy="7.5" r="1.38"/><circle cx="4.5" cy="4.5" r="1.38"/><circle cx="7.5" cy="1.5" r="1.38"/></g><path d="M-1,10 L10,-1" stroke="#a277c6" stroke-width="1.05" opacity="0.9"/></pattern><pattern id="so" width="9" height="9" patternUnits="userSpaceOnUse"><rect width="9" height="9" fill="#f1b59a"/><g fill="#a574c9"><circle cx="1.5" cy="7.5" r="1.38"/><circle cx="4.5" cy="4.5" r="1.38"/><circle cx="7.5" cy="1.5" r="1.38"/></g><path d="M-1,10 L10,-1" stroke="#a574c9" stroke-width="1.05" opacity="0.9"/></pattern><pattern id="sg" width="9" height="9" patternUnits="userSpaceOnUse"><rect width="9" height="9" fill="#b5e6c8"/><g fill="#9b86d0"><circle cx="1.5" cy="7.5" r="1.38"/><circle cx="4.5" cy="4.5" r="1.38"/><circle cx="7.5" cy="1.5" r="1.38"/></g><path d="M-1,10 L10,-1" stroke="#9b86d0" stroke-width="1.05" opacity="0.9"/></pattern><clipPath id="ic"><rect x="0" y="0" width="721" height="946"/></clipPath></defs><rect width="721" height="946" fill="url(#sp)"/><g clip-path="url(#ic)"><path d="M327.7,21.2 C335.7,20.5 346.6,20.5 354.5,24.2 C362.4,27.9 371.1,37.3 375.3,43.5 C379.5,49.7 374.3,58.1 379.8,61.3 C385.2,64.6 398.8,60.8 408.0,62.8 C417.2,64.8 427.8,68.5 434.7,73.2 C441.7,77.9 445.2,85.1 449.6,91.1 C454.1,97.0 456.0,103.9 461.5,108.9 C466.9,113.8 475.4,115.8 482.3,120.8 C489.2,125.7 497.7,133.7 503.1,138.6 C508.6,143.6 509.5,146.5 515.0,150.5 C520.4,154.5 528.4,157.4 535.8,162.4 C543.2,167.3 553.6,172.3 559.6,180.2 C565.5,188.1 569.2,199.5 571.5,209.9 C573.7,220.3 573.0,231.7 573.0,242.6 C573.0,253.5 570.7,264.9 571.5,275.3 C572.2,285.7 576.9,295.6 577.4,305.1 C577.9,314.5 573.9,322.4 574.4,331.8 C574.9,341.2 578.2,352.1 580.4,361.5 C582.6,370.9 586.8,378.9 587.8,388.3 C588.8,397.7 586.6,412.6 586.3,418.0 C586.1,423.4 588.8,412.2 586.3,420.6 C583.9,429.0 575.4,450.3 571.5,468.2 C567.5,486.0 564.0,499.9 562.6,527.6 C561.1,555.4 560.1,609.8 562.6,634.6 C565.0,659.4 573.5,661.9 577.4,676.2 C581.4,690.6 583.9,705.9 586.3,720.8 C588.8,735.7 591.3,763.3 592.3,765.4 C593.3,767.5 591.3,727.3 592.3,733.3 C593.3,739.4 593.8,786.3 598.2,801.7 C602.7,817.0 614.6,814.5 619.0,825.4 C623.5,836.3 625.7,850.2 625.0,867.1 C624.2,883.9 620.5,912.9 614.6,926.5 C608.6,940.1 620.8,945.1 589.3,948.8 C557.8,952.5 486.8,952.3 425.8,948.8 C364.9,945.3 263.4,930.7 223.7,928.0 C184.1,925.3 200.9,933.7 188.1,932.4 C175.2,931.2 156.8,927.5 146.4,920.6 C136.0,913.6 129.6,904.7 125.6,890.8 C121.7,877.0 119.2,855.2 122.7,837.3 C126.1,819.5 138.5,801.7 146.4,783.8 C154.4,766.0 163.3,741.2 170.2,730.3 C177.2,719.4 184.8,720.5 188.1,718.4 C191.3,716.4 189.0,724.9 189.5,717.8 C190.0,710.8 190.3,693.1 191.0,676.2 C191.8,659.4 191.5,641.5 194.0,616.8 C196.5,592.0 194.0,570.2 205.9,527.6 C217.8,485.1 258.4,392.2 265.3,361.5 C272.3,330.9 255.4,347.7 247.5,343.7 C239.6,339.7 225.2,341.7 217.8,337.7 C210.3,333.8 204.9,325.9 202.9,319.9 C200.9,314.0 205.9,310.0 205.9,302.1 C205.9,294.2 203.7,282.3 202.9,272.4 C202.2,262.5 200.9,252.0 201.4,242.6 C201.9,233.2 207.6,223.3 205.9,215.9 C204.2,208.5 193.0,205.0 191.0,198.1 C189.0,191.1 189.5,182.7 194.0,174.3 C198.5,165.9 207.9,155.0 217.8,147.5 C227.7,140.1 250.0,133.7 253.4,129.7 C256.9,125.7 242.0,127.2 238.6,123.7 C235.1,120.3 231.2,114.8 232.6,108.9 C234.1,102.9 240.1,94.5 247.5,88.1 C254.9,81.6 271.3,76.7 277.2,70.2 C283.2,63.8 278.2,56.4 283.2,49.4 C288.1,42.5 299.5,33.3 306.9,28.6 C314.4,23.9 319.8,22.0 327.7,21.2 Z" fill="url(#sy)"/><ellipse cx="217.8" cy="527.6" rx="64.0" ry="80.0" fill="url(#so)"/><ellipse cx="503.1" cy="584.1" rx="62.0" ry="62.0" fill="url(#so)"/><ellipse cx="256.4" cy="394.2" rx="30.0" ry="28.0" fill="url(#sg)"/><path d="M238.6,613.8 C230.7,619.3 239.6,636.1 238.6,646.5 C237.6,656.9 236.1,668.3 232.6,676.2 C229.2,684.1 221.2,687.1 217.8,694.1 C214.3,701.0 216.8,711.4 211.8,717.8 C206.9,724.3 195.0,724.8 188.1,732.7 C181.1,740.6 173.2,758.4 170.2,765.4 C167.2,772.4 173.7,767.9 170.2,774.9 C166.8,782.0 146.4,805.1 149.4,807.6 C152.4,810.1 173.7,792.7 188.1,789.8 C202.4,786.8 222.7,785.8 235.6,789.8 C248.5,793.7 258.4,813.6 265.3,813.6 C272.3,813.6 277.2,800.7 277.2,789.8 C277.2,778.9 267.3,762.1 265.3,748.2 C263.4,734.2 263.8,720.4 265.3,705.9 C266.8,691.5 270.8,676.7 274.2,661.4 C277.7,646.0 292.1,621.7 286.1,613.8 C280.2,605.9 246.5,608.4 238.6,613.8 Z" fill="#958444"/><path d="M512.0,676.2 C515.5,670.3 524.4,692.1 529.9,700.0 C535.3,707.9 539.3,715.9 544.7,723.8 C550.2,731.7 556.6,739.6 562.6,747.6 C568.5,755.5 577.4,766.3 580.4,771.3 C583.4,776.4 578.4,769.9 580.4,777.9 C582.4,785.9 595.2,814.8 592.3,819.5 C589.3,824.2 574.4,809.6 562.6,806.1 C550.7,802.7 530.4,798.0 520.9,798.7 C511.5,799.4 508.1,819.0 506.1,810.6 C504.1,802.2 508.6,760.7 509.1,748.2 C509.5,735.7 508.6,747.7 509.1,735.7 C509.5,723.7 508.6,682.2 512.0,676.2 Z" fill="#958444"/><path d="M321.8,46.5 C323.8,46.9 327.0,56.8 329.2,61.3 C331.5,65.9 329.8,74.6 336.7,76.8 C343.6,79.0 362.8,74.5 375.3,76.2 C387.8,77.9 407.8,82.3 419.9,88.1 C431.9,93.9 447.1,105.9 455.6,114.8 C464.0,123.7 469.2,139.5 476.4,147.5 C483.5,155.6 496.0,165.9 503.1,168.3 C510.2,170.8 518.1,162.5 523.9,163.9 C529.7,165.2 537.7,170.3 541.7,177.2 C545.8,184.2 549.3,199.7 550.7,209.9 C552.0,220.2 552.4,234.0 550.7,245.6 C548.9,257.2 541.5,276.5 538.8,287.2 C536.1,297.9 533.3,308.0 532.8,316.9 C532.4,325.9 533.1,338.2 535.8,346.7 C538.5,355.1 546.7,365.4 550.7,373.4 C554.7,381.4 560.8,394.9 562.6,400.2 C564.3,405.5 564.3,403.0 562.6,408.7 C560.8,414.5 553.3,429.5 550.7,438.4 C548.0,447.4 549.2,459.2 544.7,468.2 C540.3,477.1 527.2,492.1 520.9,497.9 C514.7,503.7 507.6,511.3 503.1,506.8 C498.7,502.3 493.9,480.6 491.2,468.2 C488.5,455.7 485.3,433.8 485.3,423.6 C485.3,413.4 504.6,407.2 491.2,400.2 C477.8,393.1 427.3,380.0 396.1,376.4 C364.9,372.8 301.0,380.8 283.2,376.4 C265.3,371.9 279.9,356.0 277.2,346.7 C274.5,337.3 268.9,323.8 265.3,314.0 C261.8,304.2 258.3,287.5 253.4,281.3 C248.5,275.0 234.9,275.9 232.6,272.4 C230.4,268.8 238.1,264.2 238.6,257.5 C239.0,250.8 235.6,238.5 235.6,227.8 C235.6,217.1 235.9,197.8 238.6,186.2 C241.3,174.6 248.5,160.8 253.4,150.5 C258.3,140.2 264.1,126.7 271.3,117.8 C278.4,108.9 292.5,96.9 301.0,91.1 C309.5,85.3 325.5,84.1 327.7,79.2 C330.0,74.3 316.8,63.3 315.9,58.4 C315.0,53.5 319.8,46.0 321.8,46.5 Z" fill="#f0e9a4"/><ellipse cx="375.3" cy="275.3" rx="78.0" ry="62.0" fill="#fae8a2"/><path d="M277.2,316.9 C281.2,306.0 287.1,308.5 306.9,311.0 C326.8,313.5 366.4,332.8 396.1,331.8 C425.8,330.8 467.4,312.5 485.3,305.1 C503.1,297.6 501.1,277.8 503.1,287.2 C505.1,296.6 515.0,346.7 497.2,361.5 C479.3,376.4 431.8,373.9 396.1,376.4 C360.4,378.9 303.0,386.3 283.2,376.4 C263.4,366.5 273.3,327.8 277.2,316.9 Z" fill="#fbe3a0"/><path d="M476.4,150.5 C479.1,144.8 486.8,145.1 491.2,146.0 C495.7,147.0 500.4,149.8 503.1,156.4 C505.8,163.1 507.6,176.3 507.6,186.2 C507.6,196.1 504.3,205.5 503.1,215.9 C501.9,226.3 503.1,242.1 500.1,248.6 C497.2,255.0 489.7,255.5 485.3,254.5 C480.8,253.5 475.6,250.1 473.4,242.6 C471.2,235.2 471.7,220.3 471.9,209.9 C472.1,199.5 474.1,190.1 474.9,180.2 C475.6,170.3 473.6,156.2 476.4,150.5 Z" fill="#8f9a86"/><ellipse cx="332.2" cy="267.9" rx="14.0" ry="12.0" fill="#d9b8a8" opacity="0.9"/><ellipse cx="415.4" cy="242.6" rx="14.0" ry="12.0" fill="#d9b8a8" opacity="0.9"/><path d="M301.0,281.3 C302.0,278.3 303.0,268.1 306.9,263.4 C310.9,258.7 318.3,254.5 324.8,253.0 C331.2,251.6 342.1,254.3 345.6,254.5" fill="none" stroke="#7d6a3a" stroke-width="2" stroke-linecap="round" opacity="0.8"/><path d="M399.1,235.2 C402.1,234.0 410.5,228.4 416.9,227.8 C423.4,227.1 434.3,230.7 437.7,231.3" fill="none" stroke="#7d6a3a" stroke-width="2" stroke-linecap="round" opacity="0.7"/><path d="M369.4,305.1 C371.3,305.5 377.3,307.9 381.2,307.4 C385.2,306.9 391.2,303.0 393.1,302.1" fill="none" stroke="#c9a070" stroke-width="1.3" stroke-linecap="round" opacity="0.8"/><path d="M306.9,299.1 C311.9,303.1 325.3,317.4 336.7,322.9 C348.1,328.3 362.9,331.8 375.3,331.8 C387.7,331.8 400.6,328.8 411.0,322.9 C421.4,316.9 433.3,300.6 437.7,296.1" fill="none" stroke="#d8b070" stroke-width="1.2" opacity="0.7"/><path d="M476.4,156.4 C479.8,158.4 496.2,163.4 497.2,168.3 C498.2,173.3 481.8,180.2 482.3,186.2 C482.8,192.1 500.6,198.1 500.1,204.0 C499.6,209.9 479.8,215.9 479.3,221.8 C478.8,227.8 494.2,236.7 497.2,239.7" fill="none" stroke="#c8cfae" stroke-width="2.5" opacity="0.75"/><path d="M482.3,379.0 C487.3,372.1 504.6,381.0 515.0,382.0 C525.4,383.0 536.8,380.5 544.7,384.9 C552.6,389.4 561.6,399.8 562.6,408.7 C563.5,417.6 553.6,428.5 550.7,438.4 C547.7,448.4 549.7,458.3 544.7,468.2 C539.8,478.1 527.9,491.4 520.9,497.9 C514.0,504.3 508.1,511.8 503.1,506.8 C498.2,501.9 494.2,482.0 491.2,468.2 C488.2,454.3 486.8,438.4 485.3,423.6 C483.8,408.7 477.3,385.9 482.3,379.0 Z" fill="#e7ea93"/><path d="M503.1,168.3 C507.1,153.7 517.5,162.4 523.9,163.9 C530.4,165.4 537.3,169.6 541.7,177.2 C546.2,184.9 549.2,198.6 550.7,209.9 C552.2,221.3 552.6,232.7 550.7,245.6 C548.7,258.5 541.7,275.3 538.8,287.2 C535.8,299.1 533.3,307.0 532.8,316.9 C532.3,326.9 532.8,337.3 535.8,346.7 C538.8,356.1 546.2,364.5 550.7,373.4 C555.1,382.3 559.6,392.7 562.6,400.2 C565.5,407.6 579.4,415.0 568.5,418.0 C557.6,421.0 511.0,429.9 497.2,418.0 C483.3,406.1 485.3,363.5 485.3,346.7 C485.3,329.8 494.2,326.9 497.2,316.9 C500.1,307.0 502.6,298.1 503.1,287.2 C503.6,276.3 500.1,271.4 500.1,251.6 C500.1,231.7 499.1,182.9 503.1,168.3 Z" fill="#eceaa0"/><path d="M476.4,150.5 C479.1,144.8 486.8,145.1 491.2,146.0 C495.7,147.0 500.4,149.8 503.1,156.4 C505.8,163.1 507.6,176.3 507.6,186.2 C507.6,196.1 504.3,205.5 503.1,215.9 C501.9,226.3 503.1,242.1 500.1,248.6 C497.2,255.0 489.7,255.5 485.3,254.5 C480.8,253.5 475.6,250.1 473.4,242.6 C471.2,235.2 471.7,220.3 471.9,209.9 C472.1,199.5 474.1,190.1 474.9,180.2 C475.6,170.3 473.6,156.2 476.4,150.5 Z" fill="#8f9a86"/><path d="M476.4,156.4 C479.8,158.4 496.2,163.4 497.2,168.3 C498.2,173.3 481.8,180.2 482.3,186.2 C482.8,192.1 500.6,198.1 500.1,204.0 C499.6,209.9 479.8,215.9 479.3,221.8 C478.8,227.8 494.2,236.7 497.2,239.7" fill="none" stroke="#c8cfae" stroke-width="2.5" opacity="0.75"/><ellipse cx="198.5" cy="852.2" rx="65.0" ry="66.0" fill="#fbe593"/><ellipse cx="558.1" cy="864.1" rx="49.0" ry="64.0" fill="#fbe593"/><path d="M309.9,355.6 C321.0,350.4 318.8,338.5 324.8,334.8 C330.7,331.0 345.0,327.7 354.5,327.3 C364.0,326.9 384.2,329.2 396.1,331.8 C408.0,334.4 434.2,345.1 443.7,346.7 C453.2,348.3 461.1,342.5 467.4,343.7 C473.8,344.9 486.9,351.2 491.2,355.6 C495.6,359.9 500.1,365.3 500.1,376.4 C500.1,387.4 492.8,420.7 491.2,438.4 C489.6,456.2 486.7,482.0 488.2,509.8 C489.8,537.5 499.9,620.3 503.1,646.5 C506.3,672.7 510.8,690.1 512.0,705.9 C513.2,721.8 512.0,749.5 512.0,765.4 C512.0,781.3 509.6,809.5 512.0,825.4 C514.4,841.4 526.3,868.8 529.9,884.9 C533.4,900.9 579.2,937.7 538.8,945.8 C498.4,953.9 265.5,953.9 226.7,945.8 C187.9,937.7 242.3,900.9 247.5,884.9 C252.7,868.8 263.4,843.4 265.3,825.4 C267.3,807.5 262.4,766.5 262.4,750.5 C262.4,734.6 263.7,717.8 265.3,705.9 C266.9,694.1 271.9,673.2 274.2,661.4 C276.6,649.5 280.4,628.7 283.2,616.8 C285.9,604.9 295.8,581.7 295.1,572.2 C294.3,562.7 276.0,558.1 277.2,545.4 C278.4,532.8 296.0,491.3 304.0,477.1 C311.9,462.8 328.3,447.9 336.7,438.4 C345.0,429.0 374.3,415.6 366.4,406.1 C358.5,396.6 293.9,371.8 277.2,367.5 C260.6,363.1 237.2,375.0 241.6,373.4 C245.9,371.8 298.8,360.7 309.9,355.6 Z" fill="#b3e0c0"/><path d="M280.2,634.6 C291.6,626.7 317.3,643.0 336.7,643.5 C356.0,644.0 376.3,637.6 396.1,637.6 C415.9,637.6 437.2,642.0 455.6,643.5 C473.9,645.0 496.7,631.1 506.1,646.5 C515.5,661.9 511.5,705.8 512.0,735.7 C512.5,765.5 523.4,806.5 509.1,825.4 C494.7,844.4 454.6,845.3 425.8,849.2 C397.1,853.2 363.4,853.2 336.7,849.2 C309.9,845.3 277.7,841.9 265.3,825.4 C252.9,809.0 261.9,772.9 262.4,750.5 C262.9,728.1 265.3,710.4 268.3,691.1 C271.3,671.8 268.8,642.5 280.2,634.6 Z" fill="#c4c8aa"/><path d="M324.8,334.8 C325.3,329.6 342.6,327.8 354.5,327.3 C366.4,326.9 381.2,328.6 396.1,331.8 C411.0,335.0 431.8,344.7 443.7,346.7 C455.6,348.6 459.5,342.2 467.4,343.7 C475.4,345.2 485.8,350.1 491.2,355.6 C496.7,361.0 500.1,362.6 500.1,376.4 C500.1,390.2 493.7,416.2 491.2,438.4 C488.7,460.7 493.2,498.9 485.3,509.8 C477.3,520.7 452.6,513.2 443.7,503.8 C434.7,494.4 439.7,469.2 431.8,453.3 C423.9,437.5 399.6,420.1 396.1,408.7 C392.6,397.4 418.4,393.7 411.0,385.3 C403.5,376.9 365.9,367.0 351.5,358.6 C337.2,350.1 324.3,340.0 324.8,334.8 Z" fill="#a3ddc6"/><ellipse cx="372.3" cy="509.8" rx="68.0" ry="40.0" fill="#b6e4bf"/><ellipse cx="360.4" cy="751.1" rx="28.0" ry="30.0" fill="#b5e8c0"/><ellipse cx="415.4" cy="742.2" rx="28.0" ry="30.0" fill="#b5e8c0"/><path d="M265.3,837.3 C280.2,832.4 309.9,852.2 336.7,855.2 C363.4,858.1 396.6,859.1 425.8,855.2 C455.1,851.2 494.7,826.4 512.0,831.4 C529.4,836.3 525.4,865.8 529.9,884.9 C534.3,904.0 589.3,935.7 538.8,945.8 C488.2,956.0 275.2,956.0 226.7,945.8 C178.1,935.7 241.1,903.0 247.5,884.9 C253.9,866.8 250.5,842.3 265.3,837.3 Z" fill="#a9dcc1"/><path d="M292.1,867.1 C305.0,856.9 339.1,884.9 366.4,884.9 C393.6,884.9 433.8,856.9 455.6,867.1 C477.3,877.2 524.9,932.7 497.2,945.8 C469.4,958.9 323.3,958.9 289.1,945.8 C254.9,932.7 279.2,877.2 292.1,867.1 Z" fill="#b6e2bb"/><path d="M336.7,652.4 C342.1,649.5 366.4,660.4 381.2,661.4 C396.1,662.4 416.4,655.9 425.8,658.4 C435.2,660.9 437.7,670.3 437.7,676.2 C437.7,682.2 429.3,688.6 425.8,694.1 C422.4,699.5 421.9,705.4 416.9,708.9 C412.0,712.4 402.5,717.8 396.1,714.9 C389.7,711.9 383.2,690.6 378.3,691.1 C373.3,691.6 370.8,714.9 366.4,717.8 C361.9,720.8 354.5,715.4 351.5,708.9 C348.6,702.5 351.0,688.6 348.6,679.2 C346.1,669.8 331.2,655.4 336.7,652.4 Z" fill="#a98669"/><ellipse cx="341.1" cy="493.4" rx="13.0" ry="13.0" fill="#7fc0b8" opacity="0.9"/><ellipse cx="414.5" cy="475.6" rx="13.0" ry="13.0" fill="#7fc0b8" opacity="0.9"/><path d="M315.9,494.9 C318.3,492.7 324.8,483.8 330.7,481.5 C336.7,479.3 348.1,481.5 351.5,481.5" fill="none" stroke="#4e7a6a" stroke-width="2" stroke-linecap="round" opacity="0.7"/><path d="M399.1,468.2 C402.1,467.4 411.0,463.7 416.9,463.7 C422.9,463.7 431.8,467.4 434.7,468.2" fill="none" stroke="#4e7a6a" stroke-width="2" stroke-linecap="round" opacity="0.7"/><path d="M455.6,459.2 L440.7,497.9 L467.4,477.1 L482.3,494.9 L461.5,462.2 M458.5,468.2 L458.5,527.6" fill="none" stroke="#8a6a58" stroke-width="1.6" opacity="0.6"/><ellipse cx="452.6" cy="438.4" rx="16.0" ry="15.0" fill="#d2ead0" opacity="0.9"/><path d="M345.6,849.2 C344.6,840.3 358.0,830.4 366.4,825.4 C374.8,820.5 386.2,819.0 396.1,819.5 C406.0,820.0 417.9,823.0 425.8,828.4 C433.8,833.9 444.7,843.8 443.7,852.2 C442.7,860.6 431.8,874.5 419.9,878.9 C408.0,883.4 384.7,883.9 372.3,878.9 C359.9,874.0 346.6,858.1 345.6,849.2 Z" fill="#c9c3ad"/><path d="M390.2,659.0 L390.2,819.5" stroke="#9fcfd0" stroke-width="2" opacity="0.45"/><path d="M253.4,429.5 C259.4,425.6 265.8,421.5 277.2,408.7 C288.6,395.9 307.9,361.5 321.8,352.6 C335.7,343.8 350.0,351.6 360.4,355.6 C370.8,359.5 378.8,367.5 384.2,376.4 C389.7,385.2 392.1,398.4 393.1,408.7 C394.1,419.1 394.6,429.5 390.2,438.4 C385.7,447.4 376.3,457.8 366.4,462.2 C356.5,466.7 340.6,462.7 330.7,465.2 C320.8,467.7 313.4,470.6 306.9,477.1 C300.5,483.5 297.0,492.4 292.1,503.8 C287.1,515.2 276.7,534.1 277.2,545.4 C277.7,556.8 293.1,563.3 295.1,572.2 C297.0,581.1 294.1,591.5 289.1,598.9 C284.2,606.4 273.8,614.3 265.3,616.8 C256.9,619.3 244.0,618.8 238.6,613.8 C233.1,608.9 239.6,592.0 232.6,587.1 C225.7,582.1 205.9,588.0 197.0,584.1 C188.1,580.1 182.6,572.7 179.1,563.3 C175.7,553.9 173.7,540.5 176.2,527.6 C178.6,514.7 187.1,498.9 194.0,486.0 C200.9,473.1 209.9,459.2 217.8,450.3 C225.7,441.4 235.6,436.0 241.6,432.5 C247.5,429.0 247.5,433.5 253.4,429.5 Z" fill="#c3935c"/><path d="M277.2,408.7 C281.2,401.4 285.1,394.2 295.1,388.3 C305.0,382.4 323.3,373.4 336.7,373.4 C350.0,373.4 368.4,383.4 375.3,388.3 C382.2,393.2 378.3,395.4 378.3,402.8 C378.3,410.1 379.8,423.6 375.3,432.5 C370.8,441.4 361.4,450.8 351.5,456.3 C341.6,461.7 326.3,465.7 315.9,465.2 C305.5,464.7 296.5,458.8 289.1,453.3 C281.7,447.9 273.3,439.9 271.3,432.5 C269.3,425.1 273.3,416.1 277.2,408.7 Z" fill="#dba95c"/><path d="M443.7,545.4 C449.1,539.5 459.5,531.1 470.4,527.6 C481.3,524.1 499.6,522.7 509.1,524.6 C518.5,526.6 522.9,531.1 526.9,539.5 C530.8,547.9 532.8,563.3 532.8,575.2 C532.8,587.1 530.8,598.9 526.9,610.8 C522.9,622.7 516.0,638.6 509.1,646.5 C502.1,654.4 496.2,655.9 485.3,658.4 C474.4,660.9 456.5,662.4 443.7,661.4 C430.8,660.4 415.9,657.9 408.0,652.4 C400.1,647.0 397.1,636.6 396.1,628.7 C395.1,620.7 397.1,612.3 402.1,604.9 C407.0,597.5 419.9,591.0 425.8,584.1 C431.8,577.1 434.7,569.7 437.7,563.3 C440.7,556.8 438.2,551.4 443.7,545.4 Z" fill="#cf9a58"/><ellipse cx="419.9" cy="613.8" rx="44.0" ry="46.0" fill="#d6b08a" opacity="0.55"/><path d="M402.1,610.8 C407.0,601.9 420.9,591.0 431.8,587.1 C442.7,583.1 461.0,578.1 467.4,587.1 C473.9,596.0 476.4,629.2 470.4,640.6 C464.5,651.9 443.2,655.4 431.8,655.4 C420.4,655.4 407.0,648.0 402.1,640.6 C397.1,633.1 397.1,619.7 402.1,610.8 Z" fill="#dda655"/></g><path d="M230,946 H520 V955 Q500,960 470,958 Q400,962 340,957 Q280,960 230,954 Z" fill="#4f7d55"/><path d="M534,946 H612 Q606,971 572,971 Q540,970 534,946 Z" fill="#8d8436"/><rect x="-0.7" y="-0.7" width="722.4" height="947.4" fill="none" stroke="#1c1f26" stroke-width="1.6"/><rect x="-0.7" y="-0.7" width="722.4" height="947.4" fill="none" stroke="#dfe2f2" stroke-width="1.5" stroke-dasharray="7 8" stroke-dashoffset="-0.7"/><rect x="-8.8" y="-9.1" width="17" height="17" rx="3.5" fill="#d6d9ea" stroke="#22242b" stroke-width="1.5"/><rect x="712.8" y="-9.1" width="17" height="17" rx="3.5" fill="#d6d9ea" stroke="#22242b" stroke-width="1.5"/><rect x="-8.8" y="937.7" width="17" height="17" rx="3.5" fill="#d6d9ea" stroke="#22242b" stroke-width="1.5"/><rect x="712.8" y="937.7" width="17" height="17" rx="3.5" fill="#d6d9ea" stroke="#22242b" stroke-width="1.5"/><rect x="338.5" y="-6" width="44" height="12" rx="4" fill="#d6d9ea" stroke="#22242b" stroke-width="1.5"/><rect x="338.5" y="940" width="44" height="12" rx="4" fill="#d6d9ea" stroke="#22242b" stroke-width="1.5"/><rect x="-6" y="451.0" width="12" height="44" rx="4" fill="#d6d9ea" stroke="#22242b" stroke-width="1.5"/><rect x="715" y="451.0" width="12" height="44" rx="4" fill="#d6d9ea" stroke="#22242b" stroke-width="1.5"/></svg>
</div>
<div class="a" style="left:702px;top:68px;width:288px;height:76px;background:rgba(25,26,30,.74);border-radius:7px;"></div>
<div class="t" style="left:795.30px;top:78.30px;height:25px;line-height:25px;font-size:18.99px;color:#a3a3a3;letter-spacing:-0.069px;">Bbox:</div>
<div class="t" style="left:858.50px;top:78.30px;height:25px;line-height:25px;font-size:18.72px;color:#a8a8a8;-webkit-text-stroke:0.61px currentColor;letter-spacing:0.341px;">1024×1344 px</div>
<div class="t" style="left:732.23px;top:109.30px;height:25px;line-height:25px;font-size:18.99px;color:#a3a3a3;letter-spacing:-0.051px;">Scaled Bbox:</div>
<div class="t" style="left:858.50px;top:109.30px;height:25px;line-height:25px;font-size:18.72px;color:#a8a8a8;-webkit-text-stroke:0.61px currentColor;letter-spacing:0.341px;">1024×1344 px</div>
<div class="a" style="left:1780px;top:68px;width:45px;height:45px;background:#8a90a3;border-radius:6px;"></div>
<svg viewBox="0 0 256 256" style="left:1790.5px;top:78.5px;width:24px;height:24px;color:#16181d;"><circle cx="128" cy="128" r="24" fill="currentColor"/><circle cx="128" cy="48" r="24" fill="currentColor"/><circle cx="128" cy="208" r="24" fill="currentColor"/></svg>
<div class="a" style="left:707px;top:450px;width:45px;height:315px;border-radius:6px;overflow:hidden;background:#8a90a3"><div class="a" style="left:0;top:225px;width:45px;height:45px;background:#41b0ea"></div></div>
<svg viewBox="0 0 256 256" style="left:717.5px;top:460.5px;width:24px;height:24px;color:#16181d;"><g fill="none" stroke="currentColor" stroke-width="17" stroke-linecap="round" stroke-linejoin="round"><path d="M10,218 c26,0 42,-32 42,-60 a50,50 0 1 1 50,50 c-28,0 -66,10 -92,10 Z"/><path d="M124,116 C142,84 182,30 230,30 c0,48 -54,88 -86,106"/><path d="M138,92 a76,76 0 0 1 28,28"/></g></svg>
<svg viewBox="0 0 256 256" style="left:717.5px;top:505.5px;width:24px;height:24px;color:#16181d;"><g fill="none" stroke="currentColor" stroke-width="17" stroke-linecap="round" stroke-linejoin="round"><path d="M92,212 L40,160 a12,12 0 0 1 0,-17 L146,42 a12,12 0 0 1 17,0 l58,58 a12,12 0 0 1 0,17 L126,212 Z"/><line x1="92" y1="212" x2="218" y2="212"/><line x1="92" y1="96" x2="168" y2="170"/></g></svg>
<svg viewBox="0 0 256 256" style="left:717.5px;top:550.5px;width:24px;height:24px;color:#16181d;"><g fill="none" stroke="currentColor" stroke-width="17" stroke-linecap="round" stroke-linejoin="round"><rect x="36" y="52" width="184" height="152" rx="8"/></g></svg>
<svg viewBox="0 0 256 256" style="left:717.5px;top:595.5px;width:24px;height:24px;color:#16181d;"><g fill="none" stroke="currentColor" stroke-width="17" stroke-linecap="round" stroke-linejoin="round"><path d="M43,41 L217,98 L163,125 L220,185 L193,218 L127,158 L103,218 Z"/></g></svg>
<svg viewBox="0 0 256 256" style="left:717.5px;top:640.5px;width:24px;height:24px;color:#16181d;"><g fill="none" stroke="currentColor" stroke-width="17" stroke-linecap="round" stroke-linejoin="round"><path d="M90,150 V70 a19,19 0 0 1 38,0 V116"/><path d="M128,112 V52 a19,19 0 0 1 38,0 V116"/><path d="M166,112 V84 a19,19 0 0 1 38,0 V152 c0,44 -34,74 -78,74 c-44,0 -60,-30 -82,-72 a18,18 0 0 1 31,-18 L90,162"/></g></svg>
<svg viewBox="0 0 256 256" style="left:717.5px;top:685.5px;width:24px;height:24px;color:#16181d;"><g fill="none" stroke="currentColor" stroke-width="17" stroke-linecap="round" stroke-linejoin="round"><rect x="172" y="44" width="44" height="44" rx="6"/><rect x="40" y="44" width="44" height="44" rx="6"/><rect x="172" y="172" width="44" height="44" rx="6"/><rect x="40" y="172" width="44" height="44" rx="6"/><line x1="62" y1="172" x2="62" y2="88"/><line x1="172" y1="194" x2="84" y2="194"/><line x1="194" y1="88" x2="194" y2="172"/><line x1="84" y1="66" x2="172" y2="66"/></g></svg>
<svg viewBox="0 0 256 256" style="left:717.5px;top:730.5px;width:24px;height:24px;color:#16181d;"><g fill="none" stroke="currentColor" stroke-width="17" stroke-linecap="round" stroke-linejoin="round"><path d="M176,112 l20,-20 a30,30 0 0 0 -42,-42 l-20,20"/><path d="M112,84 l60,60"/><path d="M104,72 a10,10 0 0 1 14,-2 l72,72 a10,10 0 0 1 -2,14"/><path d="M124,96 L58,162 a20,20 0 0 0 -6,18 l-8,28 a6,6 0 0 0 8,8 l28,-8 a20,20 0 0 0 18,-6 L164,136"/></g></svg>
<div class="a" style="left:707px;top:774px;width:45px;height:216px;border-radius:6px;overflow:hidden;background:#8a90a3"><div class="a" style="left:0;top:54px;width:45px;height:54px;background:#e1f50e"></div><div class="a" style="left:0;top:108px;width:45px;height:54px;background:#5b6071"></div><div class="a" style="left:0;top:162px;width:45px;height:54px;background:#c96d6b"></div></div>
<svg viewBox="0 0 256 256" style="left:717.5px;top:789px;width:24px;height:24px;color:#16181d;"><g fill="none" stroke="currentColor" stroke-width="17" stroke-linecap="round" stroke-linejoin="round"><line x1="136" y1="82" x2="216" y2="82"/><line x1="42" y1="82" x2="84" y2="82"/><circle cx="108" cy="82" r="24"/><line x1="192" y1="168" x2="216" y2="168"/><line x1="42" y1="168" x2="142" y2="168"/><circle cx="166" cy="168" r="24"/></g></svg>
<svg viewBox="0 0 256 256" style="left:718.5px;top:844px;width:22px;height:22px;color:#16181d;"><g transform="translate(-14,22) scale(0.86)"><path fill="currentColor" stroke="currentColor" stroke-width="18" stroke-linejoin="round" d="M128,20 C138,84 172,118 236,128 C172,138 138,172 128,236 C118,172 84,138 20,128 C84,118 118,84 128,20 Z"/></g><g fill="none" stroke="currentColor" stroke-width="18" stroke-linecap="round" stroke-linejoin="round"><line x1="176" y1="16" x2="176" y2="64"/><line x1="152" y1="40" x2="200" y2="40"/><line x1="224" y1="72" x2="224" y2="104"/><line x1="208" y1="88" x2="240" y2="88"/></g></svg>
<svg viewBox="0 0 256 256" style="left:717.5px;top:897px;width:24px;height:24px;color:#3a3f4c;"><g fill="none" stroke="currentColor" stroke-width="17" stroke-linecap="round" stroke-linejoin="round"><line x1="200" y1="56" x2="56" y2="200"/><line x1="200" y1="200" x2="56" y2="56"/></g></svg>
<svg viewBox="0 0 256 256" style="left:717.5px;top:951px;width:24px;height:24px;color:#16181d;"><g fill="none" stroke="currentColor" stroke-width="17" stroke-linecap="round" stroke-linejoin="round"><line x1="216" y1="60" x2="40" y2="60"/><line x1="92" y1="24" x2="164" y2="24"/><path d="M200,60 V208 a8,8 0 0 1 -8,8 H64 a8,8 0 0 1 -8,-8 V60"/></g></svg>
<div class="a" style="left:1775px;top:612px;width:45px;height:216px;background:#8a90a3;border-radius:6px;"></div>
<svg viewBox="0 0 256 256" style="left:1785.5px;top:708px;width:24px;height:24px;color:#16181d;"><g fill="none" stroke="currentColor" stroke-width="17" stroke-linecap="round" stroke-linejoin="round"><rect x="72" y="40" width="144" height="144" rx="8"/><path d="M184,184 v24 a8,8 0 0 1 -8,8 H48 a8,8 0 0 1 -8,-8 V80 a8,8 0 0 1 8,-8 H72"/><path d="M72,160 L132,104 a8,8 0 0 1 11,0 L216,176"/></g><circle cx="172" cy="84" r="13" fill="currentColor"/></svg>
<div class="a" style="left:1847px;top:18px;width:144px;height:47px;border-radius:6px 6px 0 0;border:1px solid #343842;border-bottom:none;"></div>
<div class="a" style="left:1990px;top:64px;width:552px;height:1px;background:#343842;"></div>
<div class="t" style="left:1886.73px;top:29.30px;height:25px;line-height:25px;font-size:18px;color:#5cb7ea;font-weight:700;-webkit-text-stroke:0.5px currentColor;letter-spacing:0.422px;">图层 (6)</div>
<div class="t" style="left:2045.50px;top:30.10px;height:25px;line-height:25px;font-size:18px;color:#adb2c0;font-weight:700;-webkit-text-stroke:0.5px currentColor;">画廊</div>
<div class="t" style="left:2438.50px;top:29.60px;height:25px;line-height:25px;font-size:18px;color:#adb2c0;font-weight:700;-webkit-text-stroke:0.5px currentColor;">打开查看器</div>
<div class="t" style="left:1852.00px;top:83.10px;height:25px;line-height:25px;font-size:18px;color:#adb2c0;font-weight:700;-webkit-text-stroke:0.5px currentColor;">透明度</div>
<div class="a" style="left:1915px;top:77px;width:114px;height:36px;border-radius:5px;border:1px solid #3d4048;"></div>
<div class="t" style="left:1929.00px;top:82.30px;height:25px;line-height:25px;font-size:18.99px;color:#e6e8ee;letter-spacing:-0.211px;">100%</div>
<svg viewBox="0 0 256 256" style="left:2002.5px;top:87px;width:17px;height:17px;color:#adb2c0;"><g fill="none" stroke="currentColor" stroke-width="24" stroke-linecap="round" stroke-linejoin="round"><polyline points="208,96 128,176 48,96"/></g></svg>
<svg viewBox="0 0 256 256" style="left:2332.75px;top:83.75px;width:21.5px;height:21.5px;color:#a9aebd;"><path fill="currentColor" d="M16,208 L68,104 L120,208 Z"/><circle cx="164" cy="76" r="52" fill="currentColor"/><rect x="140" y="148" width="92" height="68" rx="8" fill="currentColor"/></svg>
<svg viewBox="0 0 256 256" style="left:2369px;top:83.5px;width:22px;height:22px;color:#a9aebd;"><path fill="currentColor" d="M168,20 l24,56 l60,5 l-46,40 l14,59 l-52,-32 l-52,32 l14,-59 l-46,-40 l60,-5 Z" transform="translate(-10,0)"/><g fill="none" stroke="currentColor" stroke-width="18" stroke-linecap="round" stroke-linejoin="round"><line x1="72" y1="160" x2="16" y2="216"/><line x1="96" y1="208" x2="56" y2="248"/><line x1="152" y1="208" x2="112" y2="248"/></g></svg>
<svg viewBox="0 0 256 256" style="left:2404.5px;top:83.5px;width:22px;height:22px;color:#a9aebd;"><g fill="none" stroke="currentColor" stroke-width="24" stroke-linecap="round" stroke-linejoin="round"><rect x="32" y="48" width="192" height="160" rx="8"/><polyline points="160,96 184,96 184,120"/><polyline points="96,160 72,160 72,136"/></g></svg>
<svg viewBox="0 0 256 256" style="left:2441px;top:84px;width:21px;height:21px;color:#a9aebd;"><g fill="none" stroke="currentColor" stroke-width="24" stroke-linecap="round" stroke-linejoin="round"><path d="M216,91.300 V208 a8,8 0 0 1 -8,8 H48 a8,8 0 0 1 -8,-8 V48 a8,8 0 0 1 8,-8 H164.700 a8,8 0 0 1 5.600,2.300 l43.400,43.400 A8,8 0 0 1 216,91.300 Z"/><path d="M80,216 V152 a8,8 0 0 1 8,-8 h80 a8,8 0 0 1 8,8 v64"/><line x1="96" y1="76" x2="148" y2="76"/></g></svg>
<svg viewBox="0 0 256 256" style="left:2477.5px;top:84.5px;width:20px;height:20px;color:#a9aebd;"><rect x="32" y="80" width="144" height="144" rx="10" fill="currentColor"/><g fill="none" stroke="currentColor" stroke-width="22" stroke-linecap="round" stroke-linejoin="round"><path d="M84,36 H212 a8,8 0 0 1 8,8 V172"/></g></svg>
<svg viewBox="0 0 256 256" style="left:2513px;top:84px;width:21px;height:21px;color:#a9aebd;"><g fill="none" stroke="currentColor" stroke-width="24" stroke-linecap="round" stroke-linejoin="round"><line x1="40" y1="128" x2="216" y2="128"/><line x1="128" y1="40" x2="128" y2="216"/></g></svg>
<div class="a" style="left:1847px;top:122px;width:695px;height:1px;background:#2a2d36;"></div>
<div class="t" style="left:1852.00px;top:138.10px;height:25px;line-height:25px;font-size:18px;color:#adb2c0;font-weight:700;-webkit-text-stroke:0.5px currentColor;">去噪强度</div>
<svg viewBox="0 0 62 16" style="left:1936px;top:142px;width:62px;height:16px"><path d="M1,10.500 C4,6 7,2 10.500,2 C15,2 17,14 21.500,14 C26,14 27,2 31.500,2 C36,2 37.500,14 42,14 C46.500,14 48,2 52.500,2 C56,2 58.500,5 61,8" fill="none" stroke="#4fb0e5" stroke-width="1.7" stroke-linecap="round"/></svg>
<div class="a" style="left:2015px;top:145.5px;width:367px;height:9px;background:#565c6c;border-radius:4.5px;"></div>
<div class="a" style="left:2015px;top:145.5px;width:355.5px;height:9px;background:#8a90a3;border-radius:4.5px;"></div>
<div class="a" style="left:2359px;top:138.5px;width:23px;height:23px;background:#8a90a3;border-radius:11.5px;border:3.5px solid #c6cad6;box-shadow:0 1px 3px rgba(0,0,0,.35);"></div>
<div class="a" style="left:2385px;top:132px;width:153px;height:36px;border-radius:5px;border:1px solid #3d4048;"></div>
<div class="a" style="left:2509px;top:133px;width:1px;height:34px;background:#3d4048;"></div>
<div class="a" style="left:2509px;top:150px;width:28px;height:1px;background:#3d4048;"></div>
<div class="t" style="left:2399.00px;top:137.30px;height:25px;line-height:25px;font-size:18.99px;color:#e6e8ee;letter-spacing:-3.234px;">1</div>
<svg viewBox="0 0 256 256" style="left:2518.5px;top:136.5px;width:10px;height:10px;color:#5f6577;"><g fill="none" stroke="currentColor" stroke-width="24" stroke-linecap="round" stroke-linejoin="round"><polyline points="48,160 128,80 208,160"/></g></svg>
<svg viewBox="0 0 256 256" style="left:2518.5px;top:154px;width:10px;height:10px;color:#adb2c0;"><g fill="none" stroke="currentColor" stroke-width="24" stroke-linecap="round" stroke-linejoin="round"><polyline points="208,96 128,176 48,96"/></g></svg>
<div class="a" style="left:1847px;top:177px;width:695px;height:1px;background:#2a2d36;"></div>
<div class="a" style="left:1847px;top:187px;width:695px;height:1235px;overflow:hidden">
<div class="a" style="left:0px;top:-37px;width:695px;height:148px;background:#20232b;border-radius:6px;"></div>
<div class="a" style="left:9px;top:-37px;width:677px;height:138.5px;background:#1f2229;border-radius:6px;border:1px solid #474c5a;"></div>
<div class="t" style="left:20.00px;top:-16.70px;height:30px;line-height:30px;font-size:22.79px;color:#dfe2e8;letter-spacing:0.190px;">headpat,hug,hug from behind,</div>
<svg viewBox="0 0 256 256" style="left:658.5px;top:12.5px;width:20px;height:20px;color:#777d90;"><g fill="none" stroke="currentColor" stroke-width="24" stroke-linecap="round" stroke-linejoin="round"><polyline points="64,88 16,128 64,168"/><polyline points="192,88 240,128 192,168"/><line x1="160" y1="40" x2="96" y2="216"/></g></svg>
<svg viewBox="0 0 20 20" style="left:663px;top:79px;width:22px;height:22px;color:#8a90a3"><g stroke="currentColor" stroke-width="1.2" fill="none"><path d="M1,20 L20,1 M6,20 L20,6 M11,20 L20,11 M16,20 L20,16"/></g></svg>
<div class="a" style="left:0px;top:120px;width:695px;height:311.5px;background:#20232b;border-radius:6px;"></div>
<div class="a" style="left:9px;top:129px;width:54px;height:54px;border:1px solid #3a3d46;border-radius:3px;overflow:hidden;background-color:#1c1f26;background-image:conic-gradient(#272a31 25%,transparent 0 50%,#272a31 0 75%,transparent 0);background-size:8px 8px;"><svg viewBox="0 0 54 54" style="left:-1px;top:-1px;width:54px;height:54px"><polygon points="25.5,0.6 30.5,2.8 38,8.8 38,18.9 39,22 37.4,27.7 38.7,37.1 41.2,44 40,51.9 36.8,51.9 35.8,45.3 33.6,40.9 33,34 29,33.6 33,26.4 33.6,18.9 27.4,18.2 28,21.4 24.8,24.5 22.3,28.9 23.6,32.7 23,42.1 20.4,47.8 17.3,50.3 14.2,49 13.8,44 16.7,38.4 15.7,28.9 18.2,22.6 22.3,19.5 17.9,16.4 17.6,9.4 20.4,5" fill="#fbdf4c" stroke="#fbdf4c" stroke-width="0.6" stroke-linejoin="round"/></svg></div>
<div class="t" style="left:72.50px;top:144.10px;height:25px;line-height:25px;font-size:18px;color:#a0a5b5;font-weight:700;-webkit-text-stroke:0.5px currentColor;">区域导向</div>
<svg viewBox="0 0 256 256" style="left:551px;top:147px;width:18px;height:18px;color:#adb2c0;"><g fill="none" stroke="currentColor" stroke-width="24" stroke-linecap="round" stroke-linejoin="round"><path d="M192,224 l-64,-40 l-64,40 V48 a8,8 0 0 1 8,-8 H184 a8,8 0 0 1 8,8 Z"/></g></svg>
<svg viewBox="0 0 256 256" style="left:586.75px;top:146.75px;width:18.5px;height:18.5px;color:#adb2c0;"><g fill="none" stroke="currentColor" stroke-width="24" stroke-linecap="round" stroke-linejoin="round"><rect x="40" y="100" width="176" height="120" rx="8"/><path d="M88,100 V68 a40,40 0 0 1 78,-14"/></g></svg>
<svg viewBox="0 0 256 256" style="left:623px;top:147px;width:18px;height:18px;color:#9da3b3;"><circle cx="128" cy="128" r="104" fill="currentColor"/></svg>
<svg viewBox="0 0 256 256" style="left:659px;top:147px;width:18px;height:18px;color:#c96b68;"><path fill="currentColor" d="M216,48 H40 a12,12 0 0 0 0,24 h8 V208 a16,16 0 0 0 16,16 H192 a16,16 0 0 0 16,-16 V72 h8 a12,12 0 0 0 0,-24 Z M168,12 H88 a12,12 0 0 0 0,24 h80 a12,12 0 0 0 0,-24 Z"/></svg>
<div class="a" style="left:9px;top:192px;width:677px;height:230.5px;background:#1f2229;border-radius:6px;border:1px solid #474c5a;"></div>
<div class="t" style="left:20.00px;top:200.20px;height:30px;line-height:30px;font-size:22.79px;color:#dfe2e8;letter-spacing:0.133px;">cute,ahoge,silver hair,blue hair,gradient hair,sidelocks,single</div>
<div class="t" style="left:20.00px;top:230.00px;height:30px;line-height:30px;font-size:22.79px;color:#dfe2e8;letter-spacing:0.191px;">drill,side ponytail,straight hair,blue</div>
<div class="t" style="left:20.00px;top:259.80px;height:30px;line-height:30px;font-size:22.79px;color:#dfe2e8;letter-spacing:0.233px;">scrunchie,scrunchie,purple eyes,collared shirt,white</div>
<div class="t" style="left:20.00px;top:289.60px;height:30px;line-height:30px;font-size:22.79px;color:#dfe2e8;letter-spacing:0.166px;">shirt,blue cardigan,blue sweater,blue jacket,black jacket,open</div>
<div class="t" style="left:20.00px;top:319.40px;height:30px;line-height:30px;font-size:22.79px;color:#dfe2e8;letter-spacing:0.160px;">jacket,long sleeves,sleeves past wrists,pleated skirt,black</div>
<div class="t" style="left:20.00px;top:349.20px;height:30px;line-height:30px;font-size:22.79px;color:#dfe2e8;letter-spacing:0.357px;">skirt,</div>
<div class="t" style="left:20.00px;top:379.00px;height:30px;line-height:30px;font-size:22.79px;color:#dfe2e8;letter-spacing:0.169px;">wariza,looking at viewer,head tilt,smile,</div>
<svg viewBox="0 0 256 256" style="left:659.5px;top:201.5px;width:17px;height:17px;color:#c96b68;"><g fill="none" stroke="currentColor" stroke-width="24" stroke-linecap="round" stroke-linejoin="round"><line x1="200" y1="56" x2="56" y2="200"/><line x1="200" y1="200" x2="56" y2="56"/></g></svg>
<svg viewBox="0 0 256 256" style="left:658.5px;top:228.5px;width:20px;height:20px;color:#777d90;"><g fill="none" stroke="currentColor" stroke-width="24" stroke-linecap="round" stroke-linejoin="round"><polyline points="64,88 16,128 64,168"/><polyline points="192,88 240,128 192,168"/><line x1="160" y1="40" x2="96" y2="216"/></g></svg>
<svg viewBox="0 0 20 20" style="left:663px;top:399.5px;width:22px;height:22px;color:#8a90a3"><g stroke="currentColor" stroke-width="1.2" fill="none"><path d="M1,20 L20,1 M6,20 L20,6 M11,20 L20,11 M16,20 L20,16"/></g></svg>
<div class="a" style="left:0px;top:441px;width:695px;height:334.5px;background:#20232b;border-radius:6px;"></div>
<div class="a" style="left:9px;top:450px;width:54px;height:54px;border:1px solid #3a3d46;border-radius:3px;overflow:hidden;background-color:#1c1f26;background-image:conic-gradient(#272a31 25%,transparent 0 50%,#272a31 0 75%,transparent 0);background-size:8px 8px;"><svg viewBox="0 0 54 54" style="left:-1px;top:-1px;width:54px;height:54px"><polygon points="23,0.9 27.4,0.9 30.5,2.2 34.3,1.9 36.8,4.4 36.8,9.4 36.8,18.2 34.6,19.5 36.2,21.4 37.7,29.6 38,44.7 40,47.8 38.7,51.6 25.5,51.9 21,51.3 16,51.9 13.8,49 14.8,46.5 16.7,45.9 17.6,39 17.9,24.5 19.8,21.4 16.7,18.2 15.7,13.2 16.7,10 14.2,7.5 14.8,5 20.4,3.5" fill="#83d983" stroke="#83d983" stroke-width="0.6" stroke-linejoin="round"/></svg></div>
<div class="t" style="left:72.50px;top:465.10px;height:25px;line-height:25px;font-size:18px;color:#a0a5b5;font-weight:700;-webkit-text-stroke:0.5px currentColor;">区域导向</div>
<svg viewBox="0 0 256 256" style="left:551px;top:468px;width:18px;height:18px;color:#adb2c0;"><g fill="none" stroke="currentColor" stroke-width="24" stroke-linecap="round" stroke-linejoin="round"><path d="M192,224 l-64,-40 l-64,40 V48 a8,8 0 0 1 8,-8 H184 a8,8 0 0 1 8,8 Z"/></g></svg>
<svg viewBox="0 0 256 256" style="left:586.75px;top:467.75px;width:18.5px;height:18.5px;color:#adb2c0;"><g fill="none" stroke="currentColor" stroke-width="24" stroke-linecap="round" stroke-linejoin="round"><rect x="40" y="100" width="176" height="120" rx="8"/><path d="M88,100 V68 a40,40 0 0 1 78,-14"/></g></svg>
<svg viewBox="0 0 256 256" style="left:623px;top:468px;width:18px;height:18px;color:#9da3b3;"><circle cx="128" cy="128" r="104" fill="currentColor"/></svg>
<svg viewBox="0 0 256 256" style="left:659px;top:468px;width:18px;height:18px;color:#c96b68;"><path fill="currentColor" d="M216,48 H40 a12,12 0 0 0 0,24 h8 V208 a16,16 0 0 0 16,16 H192 a16,16 0 0 0 16,-16 V72 h8 a12,12 0 0 0 0,-24 Z M168,12 H88 a12,12 0 0 0 0,24 h80 a12,12 0 0 0 0,-24 Z"/></svg>
<div class="a" style="left:9px;top:513px;width:677px;height:252px;background:#1f2229;border-radius:6px;border:1px solid #474c5a;"></div>
<div class="t" style="left:20.00px;top:517.00px;height:30px;line-height:30px;font-size:22.79px;color:#dfe2e8;letter-spacing:0.246px;">cute,loli,cherry blossoms,hair flower,pink flower,hair</div>
<div class="t" style="left:20.00px;top:546.80px;height:30px;line-height:30px;font-size:22.79px;color:#dfe2e8;letter-spacing:0.157px;">ribbon,cat ears,animal ear fluff,grey hair,short hair,bangs,blue</div>
<div class="t" style="left:20.00px;top:576.60px;height:30px;line-height:30px;font-size:22.79px;color:#dfe2e8;letter-spacing:0.132px;">eyes,hair between eyes,eyebrows visible through</div>
<div class="t" style="left:20.00px;top:606.40px;height:30px;line-height:30px;font-size:22.79px;color:#dfe2e8;letter-spacing:0.193px;">hair,blush,white shirt,white sailor collar,red bow,pink</div>
<div class="t" style="left:20.00px;top:636.20px;height:30px;line-height:30px;font-size:22.79px;color:#dfe2e8;letter-spacing:0.192px;">cardigan,very long sleeves,red bowtie,light blue skirt,pleated</div>
<div class="t" style="left:20.00px;top:666.00px;height:30px;line-height:30px;font-size:22.79px;color:#dfe2e8;letter-spacing:0.285px;">skirt,flat chest,white thighhighs,</div>
<div class="t" style="left:20.00px;top:695.80px;height:30px;line-height:30px;font-size:22.79px;color:#dfe2e8;letter-spacing:0.194px;">sitting,knees up,looking at viewer,hugging own legs,parted</div>
<div class="t" style="left:20.00px;top:725.60px;height:30px;line-height:30px;font-size:22.79px;color:#dfe2e8;letter-spacing:0.159px;">lips,</div>
<svg viewBox="0 0 256 256" style="left:659.5px;top:522.5px;width:17px;height:17px;color:#c96b68;"><g fill="none" stroke="currentColor" stroke-width="24" stroke-linecap="round" stroke-linejoin="round"><line x1="200" y1="56" x2="56" y2="200"/><line x1="200" y1="200" x2="56" y2="56"/></g></svg>
<svg viewBox="0 0 256 256" style="left:658.5px;top:549.5px;width:20px;height:20px;color:#777d90;"><g fill="none" stroke="currentColor" stroke-width="24" stroke-linecap="round" stroke-linejoin="round"><polyline points="64,88 16,128 64,168"/><polyline points="192,88 240,128 192,168"/><line x1="160" y1="40" x2="96" y2="216"/></g></svg>
<svg viewBox="0 0 20 20" style="left:663px;top:742px;width:22px;height:22px;color:#8a90a3"><g stroke="currentColor" stroke-width="1.2" fill="none"><path d="M1,20 L20,1 M6,20 L20,6 M11,20 L20,11 M16,20 L20,16"/></g></svg>
<svg viewBox="0 0 256 256" style="left:0.5px;top:794.5px;width:17px;height:17px;color:#9da3b3;"><g fill="none" stroke="currentColor" stroke-width="24" stroke-linecap="round" stroke-linejoin="round"><polyline points="208,96 128,176 48,96"/></g></svg>
<div class="t" style="left:32.00px;top:790.30px;height:25px;line-height:25px;font-size:18px;color:#c1c5d0;font-weight:700;-webkit-text-stroke:0.5px currentColor;letter-spacing:-0.281px;">控制图层（1个）</div>
<svg viewBox="0 0 256 256" style="left:596px;top:794px;width:18px;height:18px;color:#777d90;"><g fill="none" stroke="currentColor" stroke-width="20" stroke-linecap="round" stroke-linejoin="round"><polyline points="16,176 128,240 240,176"/><polyline points="16,128 128,192 240,128"/><polygon points="16,80 128,144 240,80 128,16"/></g></svg>
<svg viewBox="0 0 256 256" style="left:631.5px;top:793.5px;width:19px;height:19px;color:#adb2c0;"><g fill="none" stroke="currentColor" stroke-width="22" stroke-linecap="round" stroke-linejoin="round"><path d="M128,56 C48,56 16,128 16,128 s32,72 112,72 s112,-72 112,-72 S208,56 128,56 Z"/><circle cx="128" cy="128" r="36"/></g></svg>
<svg viewBox="0 0 256 256" style="left:668px;top:794px;width:18px;height:18px;color:#adb2c0;"><rect x="40" y="40" width="176" height="176" rx="20" fill="currentColor"/><g fill="none" stroke="#16181d" stroke-width="18" stroke-linecap="round"><path d="M104,76 h48 M104,180 h48 M76,104 v48 M180,104 v48"/></g></svg>
<div class="a" style="left:0px;top:829px;width:695px;height:283px;background:#2c2f38;border-radius:6px;"></div>
<div class="a" style="left:9px;top:838px;width:54px;height:54px;border:1px solid #3a3d46;border-radius:3px;overflow:hidden;background-color:#1c1f26;background-image:conic-gradient(#272a31 25%,transparent 0 50%,#272a31 0 75%,transparent 0);background-size:8px 8px;"><svg viewBox="0 0 54 54" style="left:0;top:0;width:54px;height:54px"><rect x="12" y="0" width="29" height="54" fill="#000"/><g fill="#fff"><rect x="16" y="4" width="1" height="1"/><rect x="23" y="17" width="1" height="1"/><rect x="30" y="30" width="1" height="1"/><rect x="37" y="43" width="1" height="1"/><rect x="21" y="9" width="1" height="1"/><rect x="28" y="22" width="1" height="1"/><rect x="35" y="35" width="1" height="1"/><rect x="19" y="48" width="1" height="1"/><rect x="26" y="14" width="1" height="1"/><rect x="33" y="27" width="1" height="1"/><rect x="17" y="40" width="1" height="1"/><rect x="24" y="6" width="1" height="1"/><rect x="31" y="19" width="1" height="1"/><rect x="38" y="32" width="1" height="1"/><rect x="22" y="45" width="1" height="1"/><rect x="29" y="11" width="1" height="1"/><rect x="36" y="24" width="1" height="1"/><rect x="20" y="37" width="1" height="1"/><rect x="27" y="50" width="1" height="1"/><rect x="34" y="16" width="1" height="1"/><rect x="18" y="29" width="1" height="1"/><rect x="25" y="42" width="1" height="1"/><rect x="32" y="8" width="1" height="1"/><rect x="16" y="21" width="1" height="1"/><rect x="23" y="34" width="1" height="1"/><rect x="30" y="47" width="1" height="1"/><rect x="37" y="13" width="1" height="1"/><rect x="21" y="26" width="1" height="1"/><rect x="28" y="39" width="1" height="1"/><rect x="35" y="5" width="1" height="1"/><rect x="19" y="18" width="1" height="1"/><rect x="26" y="31" width="1" height="1"/><rect x="33" y="44" width="1" height="1"/><rect x="17" y="10" width="1" height="1"/><rect x="24" y="23" width="1" height="1"/><rect x="31" y="36" width="1" height="1"/><rect x="38" y="49" width="1" height="1"/><rect x="22" y="15" width="1" height="1"/><rect x="29" y="28" width="1" height="1"/><rect x="36" y="41" width="1" height="1"/><rect x="20" y="7" width="1" height="1"/><rect x="27" y="20" width="1" height="1"/><rect x="34" y="33" width="1" height="1"/><rect x="18" y="46" width="1" height="1"/><rect x="25" y="12" width="1" height="1"/><rect x="32" y="25" width="1" height="1"/><rect x="16" y="38" width="1" height="1"/><rect x="23" y="4" width="1" height="1"/><rect x="30" y="17" width="1" height="1"/><rect x="37" y="30" width="1" height="1"/><rect x="21" y="43" width="1" height="1"/><rect x="28" y="9" width="1" height="1"/><rect x="35" y="22" width="1" height="1"/><rect x="19" y="35" width="1" height="1"/><rect x="26" y="48" width="1" height="1"/><rect x="33" y="14" width="1" height="1"/><rect x="17" y="27" width="1" height="1"/><rect x="24" y="40" width="1" height="1"/><rect x="31" y="6" width="1" height="1"/><rect x="38" y="19" width="1" height="1"/><rect x="22" y="32" width="1" height="1"/><rect x="29" y="45" width="1" height="1"/><rect x="36" y="11" width="1" height="1"/><rect x="20" y="24" width="1" height="1"/><rect x="27" y="37" width="1" height="1"/><rect x="34" y="50" width="1" height="1"/><rect x="18" y="16" width="1" height="1"/><rect x="25" y="29" width="1" height="1"/><rect x="32" y="42" width="1" height="1"/><rect x="16" y="8" width="1" height="1"/></g></svg></div>
<div class="t" style="left:72.50px;top:854.10px;height:25px;line-height:25px;font-size:18px;color:#cdd1da;font-weight:700;-webkit-text-stroke:0.5px currentColor;">控制层</div>
<div class="a" style="left:470px;top:853px;width:63px;height:24px;border-radius:4px;border:1px solid #5a6072;"></div>
<div class="t" style="left:479.75px;top:855.60px;height:20px;line-height:20px;font-size:14.5px;color:#c1c5d0;">透明度</div>
<svg viewBox="0 0 256 256" style="left:551px;top:856px;width:18px;height:18px;color:#adb2c0;"><g fill="none" stroke="currentColor" stroke-width="24" stroke-linecap="round" stroke-linejoin="round"><path d="M192,224 l-64,-40 l-64,40 V48 a8,8 0 0 1 8,-8 H184 a8,8 0 0 1 8,8 Z"/></g></svg>
<svg viewBox="0 0 256 256" style="left:586.75px;top:855.75px;width:18.5px;height:18.5px;color:#adb2c0;"><g fill="none" stroke="currentColor" stroke-width="24" stroke-linecap="round" stroke-linejoin="round"><rect x="40" y="100" width="176" height="120" rx="8"/><path d="M88,100 V68 a40,40 0 0 1 78,-14"/></g></svg>
<svg viewBox="0 0 256 256" style="left:623px;top:856px;width:18px;height:18px;color:#9da3b3;"><circle cx="128" cy="128" r="104" fill="currentColor"/></svg>
<svg viewBox="0 0 256 256" style="left:659px;top:856px;width:18px;height:18px;color:#c96b68;"><path fill="currentColor" d="M216,48 H40 a12,12 0 0 0 0,24 h8 V208 a16,16 0 0 0 16,16 H192 a16,16 0 0 0 16,-16 V72 h8 a12,12 0 0 0 0,-24 Z M168,12 H88 a12,12 0 0 0 0,24 h80 a12,12 0 0 0 0,-24 Z"/></svg>
<div class="a" style="left:9px;top:901px;width:542px;height:41px;background:#404553;border-radius:6px;"></div>
<div class="t" style="left:27.00px;top:908.80px;height:25px;line-height:25px;font-size:18.99px;color:#dfe2e8;letter-spacing:0.108px;">Multi-Guidance Detection (Union Pro)</div>
<svg viewBox="0 0 256 256" style="left:524.5px;top:915px;width:15px;height:15px;color:#dfe2e8;"><g fill="none" stroke="currentColor" stroke-width="24" stroke-linecap="round" stroke-linejoin="round"><polyline points="208,96 128,176 48,96"/></g></svg>
<svg viewBox="0 0 256 256" style="left:567.75px;top:911.25px;width:20.5px;height:20.5px;color:#adb2c0;"><path fill="currentColor" d="M168,20 l24,56 l60,5 l-46,40 l14,59 l-52,-32 l-52,32 l14,-59 l-46,-40 l60,-5 Z" transform="translate(-10,0)"/><g fill="none" stroke="currentColor" stroke-width="18" stroke-linecap="round" stroke-linejoin="round"><line x1="72" y1="160" x2="16" y2="216"/><line x1="96" y1="208" x2="56" y2="248"/><line x1="152" y1="208" x2="112" y2="248"/></g></svg>
<svg viewBox="0 0 256 256" style="left:613px;top:911.5px;width:20px;height:20px;color:#adb2c0;"><g fill="none" stroke="currentColor" stroke-width="20" stroke-linecap="round" stroke-linejoin="round"><rect x="172" y="44" width="44" height="44" rx="6"/><rect x="40" y="44" width="44" height="44" rx="6"/><rect x="172" y="172" width="44" height="44" rx="6"/><rect x="40" y="172" width="44" height="44" rx="6"/><line x1="62" y1="172" x2="62" y2="88"/><line x1="172" y1="194" x2="84" y2="194"/><line x1="194" y1="88" x2="194" y2="172"/><line x1="84" y1="66" x2="172" y2="66"/></g></svg>
<svg viewBox="0 0 256 256" style="left:657.75px;top:910.75px;width:20.5px;height:20.5px;color:#adb2c0;"><g fill="none" stroke="currentColor" stroke-width="22" stroke-linecap="round" stroke-linejoin="round"><polyline points="88,72 128,32 168,72"/><line x1="128" y1="136" x2="128" y2="32"/><path d="M84,136 H48 a8,8 0 0 0 -8,8 v60 a8,8 0 0 0 8,8 H208 a8,8 0 0 0 8,-8 v-60 a8,8 0 0 0 -8,-8 H172"/></g><circle cx="184" cy="176" r="12" fill="currentColor"/></svg>
<div class="t" style="left:10.00px;top:964.30px;height:25px;line-height:25px;font-size:18.72px;color:#adb2c0;-webkit-text-stroke:0.61px currentColor;letter-spacing:0.596px;">Weight</div>
<div class="a" style="left:89px;top:972.5px;width:489px;height:9px;background:#565c6c;border-radius:4.5px"></div><div class="a" style="left:89px;top:972.5px;width:186.5px;height:9px;background:#8a90a3;border-radius:4.5px"></div><div class="a" style="left:264px;top:965.5px;width:23.0px;height:23.0px;background:#8a90a3;border-radius:11.5px;border:3.5px solid #c6cad6;box-shadow:0 1px 3px rgba(0,0,0,.35)"></div>
<div class="a" style="left:596px;top:956px;width:90px;height:42px;background:#404553;border-radius:6px;"></div>
<div class="t" style="left:611.00px;top:964.30px;height:25px;line-height:25px;font-size:18.99px;color:#dfe2e8;letter-spacing:-0.039px;">0.75</div>
<svg viewBox="0 0 256 256" style="left:665.5px;top:962px;width:11px;height:11px;color:#adb2c0;"><g fill="none" stroke="currentColor" stroke-width="24" stroke-linecap="round" stroke-linejoin="round"><polyline points="48,160 128,80 208,160"/></g></svg>
<svg viewBox="0 0 256 256" style="left:665.5px;top:981px;width:11px;height:11px;color:#adb2c0;"><g fill="none" stroke="currentColor" stroke-width="24" stroke-linecap="round" stroke-linejoin="round"><polyline points="208,96 128,176 48,96"/></g></svg>
<div class="t" style="left:10.00px;top:1019.80px;height:25px;line-height:25px;font-size:18.72px;color:#adb2c0;-webkit-text-stroke:0.61px currentColor;letter-spacing:0.358px;">Begin/End %</div>
<div class="a" style="left:133px;top:1028px;width:544px;height:9px;background:#565c6c;border-radius:4.5px"></div><div class="a" style="left:143.5px;top:1028px;width:268px;height:9px;background:#8a90a3;border-radius:4.5px"></div><div class="a" style="left:132px;top:1021px;width:23.0px;height:23.0px;background:#8a90a3;border-radius:11.5px;border:3.5px solid #c6cad6;box-shadow:0 1px 3px rgba(0,0,0,.35)"></div><div class="a" style="left:400px;top:1021px;width:23.0px;height:23.0px;background:#8a90a3;border-radius:11.5px;border:3.5px solid #c6cad6;box-shadow:0 1px 3px rgba(0,0,0,.35)"></div>
<div class="t" style="left:10.00px;top:1071.80px;height:25px;line-height:25px;font-size:18.72px;color:#adb2c0;-webkit-text-stroke:0.61px currentColor;letter-spacing:0.475px;">Control Mode</div>
<div class="a" style="left:145px;top:1067px;width:541px;height:36px;background:#404553;border-radius:6px;"></div>
<div class="t" style="left:163.00px;top:1072.30px;height:25px;line-height:25px;font-size:18.99px;color:#dfe2e8;letter-spacing:0.082px;">Balanced (recommended)</div>
<svg viewBox="0 0 256 256" style="left:659.5px;top:1078.5px;width:15px;height:15px;color:#dfe2e8;"><g fill="none" stroke="currentColor" stroke-width="24" stroke-linecap="round" stroke-linejoin="round"><polyline points="208,96 128,176 48,96"/></g></svg>
<svg viewBox="0 0 256 256" style="left:0.5px;top:1130.5px;width:17px;height:17px;color:#9da3b3;"><g fill="none" stroke="currentColor" stroke-width="24" stroke-linecap="round" stroke-linejoin="round"><polyline points="208,96 128,176 48,96"/></g></svg>
<div class="t" style="left:32.00px;top:1126.30px;height:25px;line-height:25px;font-size:18px;color:#8a90a3;font-weight:700;-webkit-text-stroke:0.5px currentColor;letter-spacing:0.220px;">栅格图层（23 个）</div>
<svg viewBox="0 0 256 256" style="left:596px;top:1130px;width:18px;height:18px;color:#777d90;"><g fill="none" stroke="currentColor" stroke-width="20" stroke-linecap="round" stroke-linejoin="round"><polyline points="16,176 128,240 240,176"/><polyline points="16,128 128,192 240,128"/><polygon points="16,80 128,144 240,80 128,16"/></g></svg>
<svg viewBox="0 0 256 256" style="left:631.5px;top:1129.5px;width:19px;height:19px;color:#adb2c0;"><g fill="none" stroke="currentColor" stroke-width="22" stroke-linecap="round" stroke-linejoin="round"><path d="M128,56 C48,56 16,128 16,128 s32,72 112,72 s112,-72 112,-72 S208,56 128,56 Z"/><circle cx="128" cy="128" r="36"/></g></svg>
<svg viewBox="0 0 256 256" style="left:668px;top:1130px;width:18px;height:18px;color:#adb2c0;"><rect x="40" y="40" width="176" height="176" rx="20" fill="currentColor"/><g fill="none" stroke="#16181d" stroke-width="18" stroke-linecap="round"><path d="M104,76 h48 M104,180 h48 M76,104 v48 M180,104 v48"/></g></svg>
<div class="a" style="left:0px;top:1166px;width:695px;height:90px;background:#20232b;border-radius:6px;"></div>
<div class="a" style="left:9px;top:1175px;width:54px;height:54px;border:1px solid #3a3d46;border-radius:3px;overflow:hidden;background-color:#1c1f26;background-image:conic-gradient(#272a31 25%,transparent 0 50%,#272a31 0 75%,transparent 0);background-size:8px 8px;"><svg viewBox="0 0 54 54" style="left:0;top:0;width:54px;height:54px"><rect x="7.500" y="1" width="39" height="51" fill="#f6c9d8"/><ellipse cx="27" cy="17" rx="8" ry="9" fill="#e8e6f2"/><path d="M17,30 h20 l3,14 h-26 Z" fill="#3a3d55"/><ellipse cx="27" cy="40" rx="7" ry="8" fill="#f3a9c0"/><ellipse cx="27" cy="30" rx="6" ry="5" fill="#f7dfe6"/></svg></div>
<div class="t" style="left:72.50px;top:1190.60px;height:25px;line-height:25px;font-size:18px;color:#9da3b3;font-weight:700;-webkit-text-stroke:0.5px currentColor;">栅格层</div>
<svg viewBox="0 0 256 256" style="left:551px;top:1193px;width:18px;height:18px;color:#adb2c0;"><g fill="none" stroke="currentColor" stroke-width="24" stroke-linecap="round" stroke-linejoin="round"><path d="M192,224 l-64,-40 l-64,40 V48 a8,8 0 0 1 8,-8 H184 a8,8 0 0 1 8,8 Z"/></g></svg>
<svg viewBox="0 0 256 256" style="left:586.75px;top:1192.75px;width:18.5px;height:18.5px;color:#adb2c0;"><g fill="none" stroke="currentColor" stroke-width="24" stroke-linecap="round" stroke-linejoin="round"><rect x="40" y="100" width="176" height="120" rx="8"/><path d="M88,100 V68 a40,40 0 0 1 78,-14"/></g></svg>
<svg viewBox="0 0 256 256" style="left:623px;top:1193px;width:18px;height:18px;color:#9da3b3;"><circle cx="128" cy="128" r="104" fill="currentColor"/></svg>
<svg viewBox="0 0 256 256" style="left:659px;top:1193px;width:18px;height:18px;color:#c96b68;"><path fill="currentColor" d="M216,48 H40 a12,12 0 0 0 0,24 h8 V208 a16,16 0 0 0 16,16 H192 a16,16 0 0 0 16,-16 V72 h8 a12,12 0 0 0 0,-24 Z M168,12 H88 a12,12 0 0 0 0,24 h80 a12,12 0 0 0 0,-24 Z"/></svg>
</div>
</div>
</body></html>
